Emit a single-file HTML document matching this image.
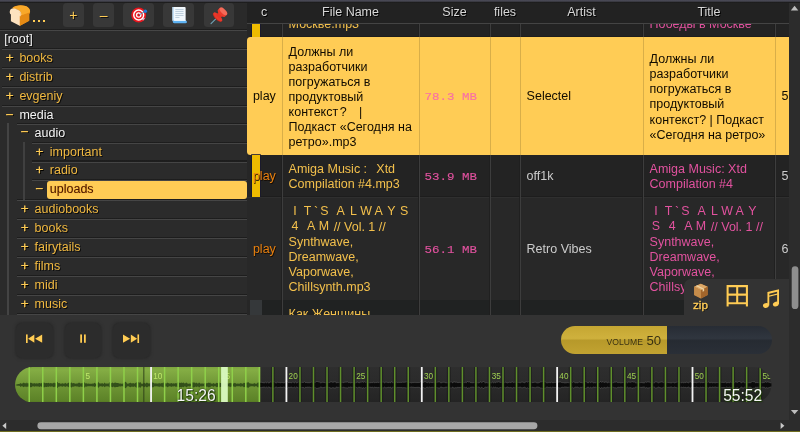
<!DOCTYPE html>
<html><head><meta charset="utf-8"><title>copyparty</title>
<style>
html,body{margin:0;padding:0;background:#2b2b2b;}
body{width:800px;height:432px;overflow:hidden;position:relative;font-family:"Liberation Sans",sans-serif;font-size:12.5px;color:#ccc;}
div{box-sizing:border-box}
#wrap{position:absolute;left:0;top:0;width:800px;height:432px;overflow:hidden;will-change:transform}
#topband{position:absolute;left:0;top:0;width:800px;height:3px;background:linear-gradient(#494955 0,#464651 38%,#2e2e33 62%,#1d1d1d 80%,#1f1f1f 100%);z-index:50}
#tree{position:absolute;left:0;top:0;width:247px;height:315px;background:#2b2b2b;overflow:hidden}
#treeh{position:absolute;left:0;top:0;width:247px;height:28.7px;background:#2a2a2a;}
.tb{position:absolute;top:3px;height:24.4px;background:#383838;border-radius:3.5px;color:#fc5;text-align:center;font-size:14px;line-height:24px;text-shadow:1px 1px 0 #111}
.sep{position:absolute;height:2.4px;margin-top:-0.3px;background:linear-gradient(#1d1d1d 0,#1e1e1e 50%,#464646 58%,#444 100%)}
.sg{position:absolute;color:#fc5;font-size:13.5px;line-height:16px;width:8px;text-align:center;text-shadow:1px 1px 0 #000;-webkit-text-stroke:0.3px #fc5}
.tn{position:absolute;color:#f1b940;font-size:12.5px;line-height:17px;white-space:nowrap;text-shadow:1px 1px 0 #0c0c0c}
.tn.w{color:#f4f4f4}
.tn.hlt{color:#4a1a00;text-shadow:0 0 1px #d8801a}
.hl{position:absolute;height:17.6px;background:#fc5;border-radius:3px}
.vl{position:absolute;width:2.5px;background:#444}
#files{position:absolute;left:247px;top:0;width:542.2px;height:315px;overflow:hidden;background:#262626}
#thead{position:absolute;left:0;top:0;width:542.2px;height:24px;background:#222;border-bottom:1.3px solid #444;z-index:5}
#thead span{position:absolute;top:5.3px;color:#d8d8d8;font-size:12.5px;line-height:15px;text-align:center;text-shadow:1px 1px 0 #000}
.row{position:absolute;left:0;width:542px}
.rbg{position:absolute;left:5px;top:0;right:0;height:100%}
.row.a .rbg{background:#232323;border-bottom:1px solid #1d1d1d}
.row.b .rbg{background:#282828;left:0.4px;border-top:1px solid #2f2f2f}
.row.play{background:#fc5;border-radius:3.5px 0 0 3.5px;color:#0c0800}
.cell{position:absolute;top:0;height:100%;border-left:1px solid #3d3d3d;padding:7.5px 0 0 5.6px;line-height:15.12px;font-size:12.5px;white-space:nowrap}
.row.a .cell,.row.b .cell{box-shadow:-0.8px 0 0 #1f1f1f}
.row .cell.c0{box-shadow:none}
.play .cell{border-left-color:#d9ae48;color:#120c00}
.cell.c0{border-left:none;text-align:center;padding-left:0}
.cell.mid{display:flex;align-items:center;padding-top:2px}
.cell.c0.mid{justify-content:center}
.fn{color:#f3c04c}
.pk{color:#e2529f}
.play .pk{color:#f96fa6}
.sz{font-family:"Liberation Mono",monospace;font-size:12.5px}
.pl{color:#e8800f;text-shadow:0.6px 0.6px 0 #140a00}
.szi{display:inline-block;transform:translate(-1.1px,1.1px) scaleY(0.9);-webkit-text-stroke:0.15px currentColor}
.ybar{position:absolute;left:5.4px;top:0;width:7.4px;height:100%;background:#eebb00;box-shadow:0 0 0 0.8px #1a1a30}
.fw{display:inline-block;width:12.7px;text-align:center;font-size:12.4px;line-height:15.12px;vertical-align:top;position:relative;top:-0.8px}
.fs{display:inline-block;width:3.5px}
#vs{position:absolute;left:789.2px;top:0;width:10.8px;height:420px;background:#2c2c2c}
#hs{position:absolute;left:0;top:419.6px;width:800px;height:12.4px;background:#2c2c2c;border-bottom:1.6px solid #706e20}
#widget{position:absolute;left:0;top:314.6px;width:789.3px;height:105px;background:#333}
#wtab{position:absolute;left:684px;top:278.6px;width:105.3px;height:40px;background:#333;border-radius:7px 0 0 0}
.pb{position:absolute;top:323.1px;width:36.6px;height:35.2px;background:#2c2c2c;border-radius:6.5px;box-shadow:0 0 2.5px 0.3px #2a2a2a}
#vol{position:absolute;left:561px;top:326.2px;width:210.5px;height:27.8px;border-radius:14px;overflow:hidden;background:linear-gradient(#272c34 0,#30363f 44%,#262b32 52%,#2a2f37 100%)}
#volf{position:absolute;left:0;top:0;width:105.8px;height:100%;background:linear-gradient(#c5a632 0,#cfb13d 44%,#b7992a 52%,#c2a331 100%)}
.t{position:absolute;color:#f6f6f6;font-size:15.6px;line-height:16px;text-shadow:0 0 2.5px #1a3308,1px 1px 1px #1d3a0a,0 0 1px #1a3308}
</style></head><body><div id="wrap">
<div id="tree">
<div class="sep" style="left:0px;top:29px;width:247px"></div>
<div class="tn w" style="left:4.2px;top:30.7px">[root]</div>
<div class="sep" style="left:1.7px;top:48px;width:245.3px"></div>
<div class="sg" style="left:5.7px;top:49.5px">+</div>
<div class="tn " style="left:19.4px;top:49.7px">books</div>
<div class="sep" style="left:1.7px;top:67px;width:245.3px"></div>
<div class="sg" style="left:5.7px;top:68.5px">+</div>
<div class="tn " style="left:19.4px;top:68.7px">distrib</div>
<div class="sep" style="left:1.7px;top:86px;width:245.3px"></div>
<div class="sg" style="left:5.7px;top:87.5px">+</div>
<div class="tn " style="left:19.4px;top:87.7px">evgeniy</div>
<div class="sep" style="left:1.7px;top:105px;width:245.3px"></div>
<div class="sg" style="left:5.7px;top:106.5px">−</div>
<div class="tn w" style="left:19.4px;top:106.7px">media</div>
<div class="sep" style="left:16.7px;top:122.9px;width:230.3px"></div>
<div class="sg" style="left:20.6px;top:124.4px">−</div>
<div class="tn w" style="left:34.599999999999994px;top:124.60000000000001px">audio</div>
<div class="sep" style="left:31.7px;top:142px;width:215.3px"></div>
<div class="sg" style="left:35.5px;top:143.5px">+</div>
<div class="tn " style="left:49.8px;top:143.7px">important</div>
<div class="sep" style="left:31.7px;top:160.5px;width:215.3px"></div>
<div class="sg" style="left:35.5px;top:162.0px">+</div>
<div class="tn " style="left:49.8px;top:162.2px">radio</div>
<div class="sep" style="left:31.7px;top:179.4px;width:215.3px"></div>
<div class="sg" style="left:35.5px;top:180.9px">−</div>
<div class="hl" style="left:47.4px;top:181.2px;width:200.0px"></div>
<div class="tn hlt" style="left:49.8px;top:181.1px">uploads</div>
<div class="sep" style="left:16.7px;top:199px;width:230.3px"></div>
<div class="sg" style="left:20.6px;top:200.5px">+</div>
<div class="tn " style="left:34.599999999999994px;top:200.7px">audiobooks</div>
<div class="sep" style="left:16.7px;top:218px;width:230.3px"></div>
<div class="sg" style="left:20.6px;top:219.5px">+</div>
<div class="tn " style="left:34.599999999999994px;top:219.7px">books</div>
<div class="sep" style="left:16.7px;top:237.3px;width:230.3px"></div>
<div class="sg" style="left:20.6px;top:238.8px">+</div>
<div class="tn " style="left:34.599999999999994px;top:239.0px">fairytails</div>
<div class="sep" style="left:16.7px;top:256.2px;width:230.3px"></div>
<div class="sg" style="left:20.6px;top:257.7px">+</div>
<div class="tn " style="left:34.599999999999994px;top:257.9px">films</div>
<div class="sep" style="left:16.7px;top:275.2px;width:230.3px"></div>
<div class="sg" style="left:20.6px;top:276.7px">+</div>
<div class="tn " style="left:34.599999999999994px;top:276.9px">midi</div>
<div class="sep" style="left:16.7px;top:294.4px;width:230.3px"></div>
<div class="sg" style="left:20.6px;top:295.9px">+</div>
<div class="tn " style="left:34.599999999999994px;top:296.09999999999997px">music</div>
<div class="sep" style="left:16.7px;top:313.4px;width:230.3px"></div>
<div class="sg" style="left:20.6px;top:314.9px">+</div>
<div class="tn " style="left:34.599999999999994px;top:315.09999999999997px">x</div>
<div class="vl" style="left:6.9px;top:123.2px;height:200px"></div>
<div class="vl" style="left:22.5px;top:142.2px;height:57.6px;background:#404040"></div>
<div id="treeh">
<svg style="position:absolute;left:8px;top:4px" width="24" height="24" viewBox="8 4 24 24">
<path d="M12.2 8.2 C15 5.2 21 4.6 25.5 6 C29 7.2 30.6 10 30 12.4 L29.2 14 L29.2 20.8 L20 25.8 L19.4 16.5 L21.2 14.6 C21.6 12 19 9.6 16 9.2 C14 8.8 12.6 8.6 12.2 8.2Z" fill="#f49a1c"/>
<path d="M21 15.2 L30 12.3 L29.2 14.2 L29.2 20.8 L20 25.8 L20 16.6Z" fill="#e58a14"/>
<path d="M12.4 8.1 C15 5.4 21 4.8 25.5 6.1 C28.6 7.1 30.4 9.6 30 12.2 L21.2 15.2 C21.8 12.2 19.2 9.8 16.2 9.3 C14.4 9 13 8.6 12.4 8.1Z" fill="#f8a829"/>
<path d="M10.2 10 C11 8.4 13.6 8.2 16 8.9 C19.4 9.8 21.8 12.2 21.2 15 L20 16.6 L20 25.6 L19.2 25.6 L10.9 21.2 L10.9 14.6 C9.6 13.6 9.4 11.6 10.2 10Z" fill="#fde2bf"/>
<path d="M18.6 12 C20.4 13 20.6 14.6 20 15.6 L19.2 16.6 L19.2 25.6 L20 25.6 L20 16.6 L21.2 15 C21.6 13.4 20.6 12.6 18.6 12Z" fill="#f7c58a"/>
</svg>
<div style="position:absolute;left:32.7px;top:19.7px;width:2.5px;height:2.6px;background:#fc5;box-shadow:5px 0 0 #fc5,10px 0 0 #fc5"></div>
<div class="tb" style="left:63px;width:20.9px">+</div>
<div class="tb" style="left:93.2px;width:20.9px">–</div>
<div class="tb" style="left:122.8px;width:30.8px"></div>
<div class="tb" style="left:163px;width:31px"></div>
<div class="tb" style="left:204px;width:30.4px"></div>
<svg style="position:absolute;left:129.6px;top:6.4px" width="18" height="18" viewBox="0 0 18 18">
<circle cx="8.7" cy="9" r="7.45" fill="#e8141c"/>
<circle cx="8.7" cy="9" r="5.7" fill="#fff"/>
<circle cx="8.7" cy="9" r="4.25" fill="#ee1c24"/>
<circle cx="8.7" cy="9" r="2.8" fill="#fff"/>
<circle cx="8.7" cy="9" r="1.5" fill="#d8101a"/>
<path d="M9 8.9 L14 6" stroke="#5a7fa8" stroke-width="1"/>
<path d="M12.6 14.2 L14.4 12" stroke="#c9c9e8" stroke-width="1.2"/>
<circle cx="15.3" cy="5.2" r="1.8" fill="#1f7ad6"/>
</svg><svg style="position:absolute;left:170.7px;top:5.9px" width="16.9" height="18.8" viewBox="0 0 18 19" preserveAspectRatio="none">
<path d="M1.6 1 L14.6 1 Q15.6 1 15.6 2 L15.6 15 L1.6 15Z" fill="#f2f8fd"/>
<path d="M1.6 1 L3 1 L3 15 L1.6 15Z" fill="#b9dcf7"/>
<path d="M3 14.6 L15.6 14.6 Q17 14.8 17 16.1 Q17 17.4 15.4 17.4 L3.6 17.4 Q1.8 17.2 1.8 15.9 Q1.9 14.8 3 14.6Z" fill="#5eb2f2"/>
<path d="M3.4 14.2 L15.6 14.2 L15.6 15.2 L3 15.2Z" fill="#e6f3fc"/>
<g stroke="#b5c9d8" stroke-width="0.9"><path d="M4.6 3.6H13.4M4.6 5.6H13.4M4.6 7.6H13.4M4.6 9.6H13.4M4.6 11.6H9"/></g>
</svg><svg style="position:absolute;left:204px;top:3px" width="31" height="25" viewBox="204 3 31 25">
<g transform="translate(218.5 16.2) rotate(45)">
<path d="M0 2 L0 10.6" stroke="#6fa3b6" stroke-width="1.1" stroke-linecap="round"/>
<ellipse cx="0" cy="1.7" rx="5.9" ry="2.3" fill="#c3271d"/>
<ellipse cx="0" cy="0.9" rx="5.9" ry="2.3" fill="#e8382a"/>
<path d="M-2.3 1 L-2.9 -4 L2.9 -4 L2.3 1Z" fill="#e33326"/>
<path d="M-4.9 -6.9 L-4.9 -4.4 A4.9 2.3 0 0 0 4.9 -4.4 L4.9 -6.9Z" fill="#ea3a2c"/>
<ellipse cx="0" cy="-6.9" rx="4.9" ry="2.3" fill="#f56a58"/>
</g>
</svg>
</div>
</div>

<div id="files">
 <div id="thead">
  <span style="left:2px;width:30px">c</span>
  <span style="left:35px;width:137px">File Name</span>
  <span style="left:172px;width:71px">Size</span>
  <span style="left:243px;width:30px">files</span>
  <span style="left:273px;width:123px">Artist</span>
  <span style="left:396px;width:132px">Title</span>
 </div>
 <!-- row 0 (partially hidden) -->
 <div class="row a" style="top:-20px;height:57px"><div class="rbg"></div>
  <div class="ybar"></div>
  <div class="cell c0" style="left:0;width:34.8px"></div>
  <div class="cell fn" style="left:35px;width:137px;padding-top:36.6px">Москве.mp3</div>
  <div class="cell" style="left:172px;width:71px"></div>
  <div class="cell" style="left:243px;width:30px"></div>
  <div class="cell" style="left:273px;width:123px"></div>
  <div class="cell pk" style="left:396px;width:132px;padding-top:36.6px">Победы в Москве</div>
  <div class="cell" style="left:528px;width:14px"></div>
 </div>
 <!-- row 1 playing -->
 <div class="row play" style="top:37px;height:117.6px">
  <div class="cell c0 mid" style="left:0;width:34.8px">play</div>
  <div class="cell" style="left:35px;width:137px">Должны ли<br>разработчики<br>погружаться в<br>продуктовый<br>контекст<span class="fw" style="text-align:left;padding-left:1.5px;box-sizing:border-box;font-size:12.5px;top:0">?</span>&nbsp;<span class="fw" style="font-size:12.5px;top:0">|</span><br>Подкаст «Сегодня на<br>ретро».mp3</div>
  <div class="cell mid pk sz" style="left:172px;width:71px"><span class="szi">78.3 MB</span></div>
  <div class="cell" style="left:243px;width:30px"></div>
  <div class="cell mid" style="left:273px;width:123px">Selectel</div>
  <div class="cell" style="left:396px;width:132px;padding-top:15.06px">Должны ли<br>разработчики<br>погружаться в<br>продуктовый<br>контекст? | Подкаст<br>«Сегодня на ретро»</div>
  <div class="cell mid" style="left:528px;width:14px">58</div>
 </div>
 <!-- row 2 -->
 <div class="row a" style="top:154.6px;height:42.6px"><div class="rbg"></div>
  <div class="ybar"></div>
  <div class="cell c0 mid pl" style="left:0;width:34.8px">play</div>
  <div class="cell fn" style="left:35px;width:137px">Amiga Music<span class="fw" style="text-align:left;padding-left:3.4px;box-sizing:border-box;font-size:12.5px;top:0">:</span> Xtd<br>Compilation #4.mp3</div>
  <div class="cell mid pk sz" style="left:172px;width:71px"><span class="szi">53.9 MB</span></div>
  <div class="cell" style="left:243px;width:30px"></div>
  <div class="cell mid" style="left:273px;width:123px">off1k</div>
  <div class="cell pk" style="left:396px;width:132px">Amiga Music: Xtd<br>Compilation #4</div>
  <div class="cell mid" style="left:528px;width:14px">58</div>
 </div>
 <!-- row 3 -->
 <div class="row b" style="top:197.2px;height:102.4px"><div class="rbg"></div>
  <div class="cell c0 mid pl" style="left:0;width:34.8px">play</div>
  <div class="cell fn" style="left:35px;width:137px"><span class="fw">I</span><span class="fw">T</span>`<span class="fw">S</span><span class="fs"> </span><span class="fw">A</span><span class="fw">L</span><span class="fw">W</span><span class="fw">A</span><span class="fw">Y</span><span class="fw">S</span><br><span class="fw">4</span><span class="fs"> </span><span class="fw">A</span><span class="fw">M</span> // Vol. 1 //<br>Synthwave,<br>Dreamwave,<br>Vaporwave,<br>Chillsynth.mp3</div>
  <div class="cell mid pk sz" style="left:172px;width:71px"><span class="szi">56.1 MB</span></div>
  <div class="cell" style="left:243px;width:30px"></div>
  <div class="cell mid" style="left:273px;width:123px">Retro Vibes</div>
  <div class="cell pk" style="left:396px;width:132px"><span class="fw">I</span><span class="fw">T</span>`<span class="fw">S</span><span class="fs"> </span><span class="fw">A</span><span class="fw">L</span><span class="fw">W</span><span class="fw">A</span><span class="fw">Y</span><br><span class="fw">S</span><span class="fs"> </span><span class="fw">4</span><span class="fs"> </span><span class="fw">A</span><span class="fw">M</span> // Vol. 1 //<br>Synthwave,<br>Dreamwave,<br>Vaporwave,<br>Chillsynth</div>
  <div class="cell mid" style="left:528px;width:14px">60</div>
 </div>
 <!-- row 4 -->
 <div class="row a" style="top:299.8px;height:60px"><div class="rbg" style="left:15px;background:#202222"></div>
  <div style="position:absolute;left:3px;top:0;width:12px;height:100%;background:#35383a"></div>
  <div class="cell fn" style="left:35px;width:137px">Как Женщины</div>
  <div class="cell" style="left:172px;width:71px"></div>
  <div class="cell" style="left:243px;width:30px"></div>
  <div class="cell" style="left:273px;width:123px"></div>
  <div class="cell pk" style="left:396px;width:132px"></div>
  <div class="cell" style="left:528px;width:14px"></div>
 </div>
</div>

<div id="vs">
 <svg style="position:absolute;left:0;top:0" width="11" height="420" viewBox="0 0 11 420">
  <path d="M1.8 10.4 L5.55 5.8 L9.3 10.4Z" fill="#bdbdbd"/>
  <path d="M1.9 410 L5.6 414.2 L9.3 410Z" fill="#bdbdbd"/>
  <rect x="2.7" y="266.3" width="6.7" height="42.8" rx="3.35" fill="#8e8e8e"/>
 </svg>
</div>
<div id="widget"></div>
<div id="wtab"></div>
<svg style="position:absolute;left:692.5px;top:283.4px" width="15.8" height="16.4" viewBox="0 0 17 17" preserveAspectRatio="none">
<path d="M8.4 0.8 L15.8 4 L15.8 12.4 L8.6 16.2 L1.2 12.4 L1.2 4Z" fill="#b6793a"/>
<path d="M8.4 0.8 L15.8 4 L8.6 7.6 L1.2 4Z" fill="#dda866"/>
<path d="M1.2 4 L8.6 7.6 L8.6 16.2 L1.2 12.4Z" fill="#c48b4a"/>
<path d="M8.6 7.6 L15.8 4 L15.8 12.4 L8.6 16.2Z" fill="#a2652b"/>
<path d="M4.6 2.4 L12 5.9 L12 8.4 L10.4 9.2 L10.4 6.7 L3 3.2Z" fill="#ecd2a4"/>
</svg>
<div style="position:absolute;left:691px;top:297.7px;width:19px;text-align:center;color:#fc5;font-size:11.7px;-webkit-text-stroke:0.35px #fc5;line-height:13px;text-shadow:1px 1px 0 #111">zip</div>
<svg style="position:absolute;left:725.5px;top:284px;filter:drop-shadow(0.7px 0.7px 0 #1c1c1c)" width="23" height="23" viewBox="0 0 23 23">
<g fill="none" stroke="#fc5" stroke-width="2.1"><path d="M1.6 2.1H20.9V19.2H1.6ZM11.2 2.1V19.2M1.6 10.6H20.9M1.6 19V22.6M20.9 19V22.6"/></g>
</svg><svg style="position:absolute;left:761px;top:288px;filter:drop-shadow(0.7px 0.7px 0 #1c1c1c)" width="20" height="21" viewBox="0 0 20 21">
<g fill="#fc5"><ellipse cx="4.9" cy="17.5" rx="3" ry="2.3" transform="rotate(-22 4.9 17.5)"/><ellipse cx="14.8" cy="16.1" rx="3" ry="2.3" transform="rotate(-22 14.8 16.1)"/>
<path d="M6.4 17.4 L6.4 4.1 L18 1.3 L18 16 L16.1 16 L16.1 6.8 L8.3 8.7 L8.3 17.4Z M8.3 5.7 L8.3 7.4 L16.1 5.5 L16.1 3.8Z" fill-rule="evenodd"/></g>
</svg>
<div class="pb" style="left:16.2px"></div>
<div class="pb" style="left:64.6px"></div>
<div class="pb" style="left:113.2px"></div>
<svg style="position:absolute;left:0;top:314px;filter:drop-shadow(0.7px 0.8px 0 #151005)" width="160" height="50" viewBox="0 314 160 50">
 <g fill="#fc5">
  <rect x="26" y="334.4" width="1.7" height="8.6"/><path d="M34.4 334.6 L34.4 342.8 L28 338.7Z"/><path d="M42.2 334.6 L42.2 342.8 L35 338.7Z"/>
  <rect x="80.2" y="334.4" width="1.8" height="8.4"/><rect x="84" y="334.4" width="1.8" height="8.4"/>
  <rect x="137.4" y="334.4" width="1.7" height="8.6"/><path d="M130.8 334.6 L130.8 342.8 L137.2 338.7Z"/><path d="M123 334.6 L123 342.8 L130.2 338.7Z"/>
 </g>
</svg>
<div id="vol"><div id="volf"></div>
 <div style="position:absolute;left:45.6px;top:11.9px;font-size:8.6px;line-height:9px;color:#3a3212">VOLUME</div>
 <div style="position:absolute;left:85.5px;top:8.3px;font-size:13.2px;line-height:14px;color:#3a3212">50</div>
</div>
<svg id="sb" width="756.5" height="35.5" viewBox="0 0 756.5 35.5" style="position:absolute;left:15.2px;top:366.8px">
<defs><clipPath id="pill"><rect x="0" y="0" width="756.5" height="35.5" rx="17.75" ry="17.75"/></clipPath>
<linearGradient id="gd" x1="0" y1="0" x2="0" y2="1"><stop offset="0" stop-color="#2e2e2e"/><stop offset="0.5" stop-color="#2a2a2a"/><stop offset="1" stop-color="#242424"/></linearGradient>
<linearGradient id="gg" x1="0" y1="0" x2="0" y2="1"><stop offset="0" stop-color="#7ea53f"/><stop offset="0.08" stop-color="#84ad44"/><stop offset="0.5" stop-color="#6f9635"/><stop offset="0.94" stop-color="#5d8328"/><stop offset="1" stop-color="#557822"/></linearGradient>
</defs><g clip-path="url(#pill)">
<rect width="756.5" height="35.5" fill="url(#gd)"/>
<rect width="245.3" height="35.5" fill="url(#gg)"/>
<path d="M245.3,16.1 L246.2,15.9 L247.1,16.1 L248.0,16.4 L248.9,16.4 L249.8,16.4 L250.7,15.8 L251.6,16.5 L252.5,15.8 L253.4,16.5 L254.3,16.5 L255.2,15.6 L256.1,15.9 L257.0,15.6 L257.9,15.8 L258.8,15.3 L259.7,15.8 L260.6,16.4 L261.5,16.5 L262.4,15.9 L263.3,16.1 L264.2,16.0 L265.1,16.5 L266.0,16.3 L266.9,16.0 L267.8,16.2 L268.7,16.5 L269.6,16.3 L270.5,15.6 L271.4,16.2 L272.3,15.3 L273.2,16.3 L274.1,16.2 L275.0,16.1 L275.9,16.4 L276.8,16.5 L277.7,15.6 L278.6,16.0 L279.5,16.5 L280.4,15.7 L281.3,16.5 L282.2,16.4 L283.1,15.6 L284.0,15.9 L284.9,16.0 L285.8,16.2 L286.7,16.0 L287.6,16.1 L288.5,16.1 L289.4,15.3 L290.3,16.3 L291.2,16.1 L292.1,16.3 L293.0,16.5 L293.9,16.2 L294.8,16.4 L295.7,16.0 L296.6,15.8 L297.5,16.3 L298.4,16.2 L299.3,16.0 L300.2,16.1 L301.1,15.2 L302.0,15.3 L302.9,15.2 L303.8,15.7 L304.7,15.8 L305.6,16.5 L306.5,16.3 L307.4,15.9 L308.3,16.0 L309.2,16.1 L310.1,16.4 L311.0,16.3 L311.9,16.3 L312.8,16.2 L313.7,16.3 L314.6,16.1 L315.5,15.6 L316.4,15.4 L317.3,15.9 L318.2,15.6 L319.1,16.1 L320.0,15.1 L320.9,16.3 L321.8,16.5 L322.7,16.2 L323.6,16.2 L324.5,16.0 L325.4,16.3 L326.3,16.1 L327.2,15.9 L328.1,16.3 L329.0,16.3 L329.9,15.7 L330.8,15.8 L331.7,15.7 L332.6,15.6 L333.5,16.3 L334.4,16.1 L335.3,16.5 L336.2,16.3 L337.1,16.3 L338.0,16.1 L338.9,16.4 L339.8,16.4 L340.7,16.5 L341.6,16.0 L342.5,15.7 L343.4,16.2 L344.3,16.5 L345.2,15.6 L346.1,16.3 L347.0,15.2 L347.9,15.7 L348.8,16.0 L349.7,15.3 L350.6,16.1 L351.5,15.9 L352.4,15.9 L353.3,16.3 L354.2,16.4 L355.1,16.2 L356.0,16.5 L356.9,15.9 L357.8,16.4 L358.7,15.8 L359.6,16.4 L360.5,16.1 L361.4,16.2 L362.3,15.9 L363.2,16.2 L364.1,16.0 L365.0,15.8 L365.9,16.1 L366.8,16.4 L367.7,15.7 L368.6,15.8 L369.5,16.5 L370.4,15.9 L371.3,15.8 L372.2,15.9 L373.1,16.5 L374.0,15.9 L374.9,16.1 L375.8,16.5 L376.7,15.1 L377.6,16.4 L378.5,16.3 L379.4,15.6 L380.3,16.5 L381.2,15.8 L382.1,15.9 L383.0,16.5 L383.9,15.8 L384.8,16.2 L385.7,16.0 L386.6,16.1 L387.5,15.8 L388.4,15.9 L389.3,15.9 L390.2,15.8 L391.1,15.6 L392.0,15.5 L392.9,16.0 L393.8,16.3 L394.7,16.2 L395.6,16.3 L396.5,16.5 L397.4,16.3 L398.3,16.3 L399.2,16.2 L400.1,15.8 L401.0,16.5 L401.9,15.9 L402.8,16.3 L403.7,16.2 L404.6,16.1 L405.5,15.5 L406.4,15.5 L407.3,15.9 L408.2,16.1 L409.1,15.6 L410.0,15.4 L410.9,15.6 L411.8,16.3 L412.7,16.3 L413.6,15.8 L414.5,16.5 L415.4,16.0 L416.3,16.1 L417.2,16.4 L418.1,15.8 L419.0,16.4 L419.9,16.3 L420.8,15.6 L421.7,16.1 L422.6,15.8 L423.5,15.6 L424.4,15.5 L425.3,16.3 L426.2,16.4 L427.1,16.3 L428.0,15.6 L428.9,16.1 L429.8,15.9 L430.7,16.4 L431.6,16.4 L432.5,16.4 L433.4,16.2 L434.3,16.1 L435.2,15.9 L436.1,15.2 L437.0,16.2 L437.9,16.4 L438.8,15.6 L439.7,15.6 L440.6,15.9 L441.5,15.8 L442.4,16.2 L443.3,16.2 L444.2,16.1 L445.1,16.1 L446.0,16.2 L446.9,16.1 L447.8,16.5 L448.7,16.1 L449.6,16.3 L450.5,15.9 L451.4,16.4 L452.3,15.1 L453.2,15.8 L454.1,15.2 L455.0,16.0 L455.9,16.4 L456.8,16.3 L457.7,16.4 L458.6,16.3 L459.5,16.1 L460.4,15.7 L461.3,16.5 L462.2,16.2 L463.1,16.5 L464.0,16.5 L464.9,15.9 L465.8,15.4 L466.7,16.3 L467.6,15.8 L468.5,14.8 L469.4,15.9 L470.3,16.5 L471.2,16.1 L472.1,16.5 L473.0,16.5 L473.9,16.5 L474.8,16.5 L475.7,16.1 L476.6,16.5 L477.5,15.7 L478.4,16.5 L479.3,15.8 L480.2,16.5 L481.1,15.8 L482.0,15.8 L482.9,15.8 L483.8,15.3 L484.7,15.9 L485.6,16.1 L486.5,16.0 L487.4,16.3 L488.3,15.7 L489.2,16.4 L490.1,15.7 L491.0,16.0 L491.9,16.5 L492.8,16.5 L493.7,16.1 L494.6,15.9 L495.5,16.2 L496.4,15.9 L497.3,15.4 L498.2,16.2 L499.1,15.8 L500.0,16.0 L500.9,15.9 L501.8,16.4 L502.7,16.1 L503.6,16.1 L504.5,16.3 L505.4,16.4 L506.3,15.9 L507.2,15.7 L508.1,15.9 L509.0,16.2 L509.9,16.4 L510.8,15.6 L511.7,15.3 L512.6,15.9 L513.5,14.9 L514.4,15.9 L515.3,16.3 L516.2,15.8 L517.1,16.4 L518.0,16.1 L518.9,16.2 L519.8,15.8 L520.7,15.9 L521.6,16.4 L522.5,16.5 L523.4,16.4 L524.3,16.3 L525.2,15.5 L526.1,15.8 L527.0,15.1 L527.9,15.3 L528.8,15.7 L529.7,15.3 L530.6,15.7 L531.5,16.4 L532.4,16.5 L533.3,16.2 L534.2,15.9 L535.1,16.5 L536.0,16.0 L536.9,15.7 L537.8,16.5 L538.7,16.2 L539.6,16.1 L540.5,16.1 L541.4,15.8 L542.3,15.5 L543.2,15.8 L544.1,15.8 L545.0,15.4 L545.9,15.8 L546.8,16.3 L547.7,16.3 L548.6,16.2 L549.5,16.5 L550.4,16.5 L551.3,16.5 L552.2,16.1 L553.1,16.4 L554.0,16.2 L554.9,16.4 L555.8,16.1 L556.7,15.6 L557.6,16.3 L558.5,15.4 L559.4,15.9 L560.3,16.4 L561.2,16.3 L562.1,16.5 L563.0,16.5 L563.9,15.6 L564.8,15.8 L565.7,16.3 L566.6,16.2 L567.5,16.4 L568.4,16.0 L569.3,16.3 L570.2,15.0 L571.1,15.0 L572.0,16.4 L572.9,16.3 L573.8,16.4 L574.7,15.4 L575.6,16.3 L576.5,15.7 L577.4,15.8 L578.3,16.5 L579.2,16.2 L580.1,16.4 L581.0,16.5 L581.9,15.7 L582.8,16.4 L583.7,16.2 L584.6,16.1 L585.5,15.1 L586.4,16.0 L587.3,15.6 L588.2,15.4 L589.1,16.3 L590.0,15.6 L590.9,15.8 L591.8,15.9 L592.7,16.5 L593.6,15.9 L594.5,16.0 L595.4,16.1 L596.3,15.6 L597.2,16.5 L598.1,16.5 L599.0,16.0 L599.9,15.7 L600.8,15.8 L601.7,15.5 L602.6,16.2 L603.5,16.3 L604.4,16.1 L605.3,16.4 L606.2,16.5 L607.1,16.1 L608.0,16.5 L608.9,16.0 L609.8,16.5 L610.7,16.5 L611.6,15.7 L612.5,16.5 L613.4,15.7 L614.3,15.8 L615.2,15.7 L616.1,16.2 L617.0,15.0 L617.9,15.7 L618.8,15.7 L619.7,15.7 L620.6,16.5 L621.5,16.5 L622.4,16.5 L623.3,16.0 L624.2,16.2 L625.1,16.5 L626.0,15.8 L626.9,16.4 L627.8,16.3 L628.7,16.5 L629.6,16.4 L630.5,15.6 L631.4,16.0 L632.3,15.6 L633.2,15.6 L634.1,15.7 L635.0,15.9 L635.9,16.3 L636.8,16.4 L637.7,16.4 L638.6,16.5 L639.5,16.4 L640.4,15.6 L641.3,15.6 L642.2,15.7 L643.1,16.5 L644.0,16.4 L644.9,15.8 L645.8,15.8 L646.7,15.5 L647.6,15.8 L648.5,16.3 L649.4,15.8 L650.3,16.3 L651.2,16.5 L652.1,16.3 L653.0,15.8 L653.9,16.5 L654.8,16.2 L655.7,16.5 L656.6,16.5 L657.5,16.0 L658.4,16.0 L659.3,16.5 L660.2,16.4 L661.1,15.7 L662.0,16.2 L662.9,15.5 L663.8,15.4 L664.7,16.4 L665.6,16.0 L666.5,16.4 L667.4,16.0 L668.3,16.5 L669.2,15.9 L670.1,16.4 L671.0,15.9 L671.9,15.8 L672.8,16.3 L673.7,16.5 L674.6,15.8 L675.5,15.5 L676.4,16.3 L677.3,15.5 L678.2,16.1 L679.1,16.2 L680.0,15.9 L680.9,16.3 L681.8,16.5 L682.7,16.0 L683.6,15.9 L684.5,15.8 L685.4,16.4 L686.3,16.0 L687.2,16.4 L688.1,16.0 L689.0,16.5 L689.9,15.8 L690.8,15.2 L691.7,15.8 L692.6,16.2 L693.5,15.5 L694.4,16.4 L695.3,16.4 L696.2,15.9 L697.1,16.5 L698.0,16.5 L698.9,16.1 L699.8,16.5 L700.7,16.5 L701.6,16.2 L702.5,16.2 L703.4,16.3 L704.3,16.1 L705.2,15.7 L706.1,16.0 L707.0,16.0 L707.9,16.0 L708.8,16.1 L709.7,16.0 L710.6,15.8 L711.5,16.5 L712.4,16.2 L713.3,16.0 L714.2,16.5 L715.1,15.9 L716.0,15.7 L716.9,16.4 L717.8,16.3 L718.7,15.9 L719.6,16.3 L720.5,15.5 L721.4,15.7 L722.3,16.1 L723.2,15.4 L724.1,15.1 L725.0,15.1 L725.9,16.5 L726.8,16.3 L727.7,15.7 L728.6,15.7 L729.5,16.4 L730.4,16.3 L731.3,16.1 L732.2,16.4 L733.1,16.2 L734.0,16.5 L734.9,16.3 L735.8,16.3 L736.7,15.6 L737.6,15.1 L738.5,15.4 L739.4,15.0 L740.3,16.5 L741.2,16.1 L742.1,16.4 L743.0,16.1 L743.9,16.4 L744.8,16.2 L745.7,15.7 L746.6,16.2 L747.5,16.4 L748.4,16.3 L749.3,16.3 L750.2,15.4 L751.1,15.8 L752.0,16.0 L752.9,15.2 L753.8,16.0 L754.7,16.1 L755.6,16.5 L756.5,16.5 L756.5,19.4 L755.6,19.4 L754.7,19.8 L753.8,19.9 L752.9,20.7 L752.0,19.9 L751.1,20.1 L750.2,20.5 L749.3,19.6 L748.4,19.6 L747.5,19.5 L746.6,19.7 L745.7,20.2 L744.8,19.7 L743.9,19.5 L743.0,19.8 L742.1,19.5 L741.2,19.8 L740.3,19.4 L739.4,20.9 L738.5,20.5 L737.6,20.8 L736.7,20.3 L735.8,19.6 L734.9,19.6 L734.0,19.4 L733.1,19.7 L732.2,19.5 L731.3,19.8 L730.4,19.6 L729.5,19.5 L728.6,20.2 L727.7,20.2 L726.8,19.6 L725.9,19.4 L725.0,20.8 L724.1,20.8 L723.2,20.5 L722.3,19.8 L721.4,20.2 L720.5,20.4 L719.6,19.6 L718.7,20.0 L717.8,19.6 L716.9,19.5 L716.0,20.2 L715.1,20.0 L714.2,19.4 L713.3,19.9 L712.4,19.7 L711.5,19.4 L710.6,20.1 L709.7,19.9 L708.8,19.8 L707.9,19.9 L707.0,19.9 L706.1,19.9 L705.2,20.2 L704.3,19.8 L703.4,19.6 L702.5,19.7 L701.6,19.7 L700.7,19.4 L699.8,19.4 L698.9,19.8 L698.0,19.4 L697.1,19.4 L696.2,20.0 L695.3,19.5 L694.4,19.5 L693.5,20.4 L692.6,19.7 L691.7,20.1 L690.8,20.7 L689.9,20.1 L689.0,19.4 L688.1,19.9 L687.2,19.5 L686.3,19.9 L685.4,19.5 L684.5,20.1 L683.6,20.0 L682.7,19.9 L681.8,19.4 L680.9,19.6 L680.0,20.0 L679.1,19.7 L678.2,19.8 L677.3,20.4 L676.4,19.6 L675.5,20.4 L674.6,20.1 L673.7,19.4 L672.8,19.6 L671.9,20.1 L671.0,20.0 L670.1,19.5 L669.2,20.0 L668.3,19.4 L667.4,19.9 L666.5,19.5 L665.6,19.9 L664.7,19.5 L663.8,20.5 L662.9,20.4 L662.0,19.7 L661.1,20.2 L660.2,19.5 L659.3,19.4 L658.4,19.9 L657.5,19.9 L656.6,19.4 L655.7,19.4 L654.8,19.7 L653.9,19.4 L653.0,20.1 L652.1,19.6 L651.2,19.4 L650.3,19.6 L649.4,20.1 L648.5,19.6 L647.6,20.1 L646.7,20.4 L645.8,20.1 L644.9,20.1 L644.0,19.5 L643.1,19.4 L642.2,20.2 L641.3,20.3 L640.4,20.3 L639.5,19.5 L638.6,19.4 L637.7,19.5 L636.8,19.5 L635.9,19.6 L635.0,20.0 L634.1,20.2 L633.2,20.3 L632.3,20.3 L631.4,19.9 L630.5,20.3 L629.6,19.5 L628.7,19.4 L627.8,19.6 L626.9,19.5 L626.0,20.1 L625.1,19.4 L624.2,19.7 L623.3,19.9 L622.4,19.4 L621.5,19.4 L620.6,19.4 L619.7,20.2 L618.8,20.2 L617.9,20.2 L617.0,20.9 L616.1,19.7 L615.2,20.2 L614.3,20.1 L613.4,20.2 L612.5,19.4 L611.6,20.2 L610.7,19.4 L609.8,19.4 L608.9,19.9 L608.0,19.4 L607.1,19.8 L606.2,19.4 L605.3,19.5 L604.4,19.8 L603.5,19.6 L602.6,19.7 L601.7,20.4 L600.8,20.1 L599.9,20.2 L599.0,19.9 L598.1,19.4 L597.2,19.4 L596.3,20.3 L595.4,19.8 L594.5,19.9 L593.6,20.0 L592.7,19.4 L591.8,20.0 L590.9,20.1 L590.0,20.3 L589.1,19.6 L588.2,20.5 L587.3,20.3 L586.4,19.9 L585.5,20.8 L584.6,19.8 L583.7,19.7 L582.8,19.5 L581.9,20.2 L581.0,19.4 L580.1,19.5 L579.2,19.7 L578.3,19.4 L577.4,20.1 L576.5,20.2 L575.6,19.6 L574.7,20.5 L573.8,19.5 L572.9,19.6 L572.0,19.5 L571.1,20.9 L570.2,20.9 L569.3,19.6 L568.4,19.9 L567.5,19.5 L566.6,19.7 L565.7,19.6 L564.8,20.1 L563.9,20.3 L563.0,19.4 L562.1,19.4 L561.2,19.6 L560.3,19.5 L559.4,20.0 L558.5,20.5 L557.6,19.6 L556.7,20.3 L555.8,19.8 L554.9,19.5 L554.0,19.7 L553.1,19.5 L552.2,19.8 L551.3,19.4 L550.4,19.4 L549.5,19.4 L548.6,19.7 L547.7,19.6 L546.8,19.6 L545.9,20.1 L545.0,20.5 L544.1,20.1 L543.2,20.1 L542.3,20.4 L541.4,20.1 L540.5,19.8 L539.6,19.8 L538.7,19.7 L537.8,19.4 L536.9,20.2 L536.0,19.9 L535.1,19.4 L534.2,20.0 L533.3,19.7 L532.4,19.4 L531.5,19.5 L530.6,20.2 L529.7,20.6 L528.8,20.2 L527.9,20.6 L527.0,20.8 L526.1,20.1 L525.2,20.4 L524.3,19.6 L523.4,19.5 L522.5,19.4 L521.6,19.5 L520.7,20.0 L519.8,20.1 L518.9,19.7 L518.0,19.8 L517.1,19.5 L516.2,20.1 L515.3,19.6 L514.4,20.0 L513.5,21.0 L512.6,20.0 L511.7,20.6 L510.8,20.3 L509.9,19.5 L509.0,19.7 L508.1,20.0 L507.2,20.2 L506.3,20.0 L505.4,19.5 L504.5,19.6 L503.6,19.8 L502.7,19.8 L501.8,19.5 L500.9,20.0 L500.0,19.9 L499.1,20.1 L498.2,19.7 L497.3,20.5 L496.4,20.0 L495.5,19.7 L494.6,20.0 L493.7,19.8 L492.8,19.4 L491.9,19.4 L491.0,19.9 L490.1,20.2 L489.2,19.5 L488.3,20.2 L487.4,19.6 L486.5,19.9 L485.6,19.8 L484.7,20.0 L483.8,20.6 L482.9,20.1 L482.0,20.1 L481.1,20.1 L480.2,19.4 L479.3,20.1 L478.4,19.4 L477.5,20.2 L476.6,19.4 L475.7,19.8 L474.8,19.4 L473.9,19.4 L473.0,19.4 L472.1,19.4 L471.2,19.8 L470.3,19.4 L469.4,20.0 L468.5,21.1 L467.6,20.1 L466.7,19.6 L465.8,20.5 L464.9,20.0 L464.0,19.4 L463.1,19.4 L462.2,19.7 L461.3,19.4 L460.4,20.2 L459.5,19.8 L458.6,19.6 L457.7,19.5 L456.8,19.6 L455.9,19.5 L455.0,19.9 L454.1,20.7 L453.2,20.1 L452.3,20.8 L451.4,19.5 L450.5,20.0 L449.6,19.6 L448.7,19.8 L447.8,19.4 L446.9,19.8 L446.0,19.7 L445.1,19.8 L444.2,19.8 L443.3,19.7 L442.4,19.7 L441.5,20.1 L440.6,20.0 L439.7,20.3 L438.8,20.3 L437.9,19.5 L437.0,19.7 L436.1,20.7 L435.2,20.0 L434.3,19.8 L433.4,19.7 L432.5,19.5 L431.6,19.5 L430.7,19.5 L429.8,20.0 L428.9,19.8 L428.0,20.3 L427.1,19.6 L426.2,19.5 L425.3,19.6 L424.4,20.4 L423.5,20.3 L422.6,20.1 L421.7,19.8 L420.8,20.3 L419.9,19.6 L419.0,19.5 L418.1,20.1 L417.2,19.5 L416.3,19.8 L415.4,19.9 L414.5,19.4 L413.6,20.1 L412.7,19.6 L411.8,19.6 L410.9,20.3 L410.0,20.5 L409.1,20.3 L408.2,19.8 L407.3,20.0 L406.4,20.4 L405.5,20.4 L404.6,19.8 L403.7,19.7 L402.8,19.6 L401.9,20.0 L401.0,19.4 L400.1,20.1 L399.2,19.7 L398.3,19.6 L397.4,19.6 L396.5,19.4 L395.6,19.6 L394.7,19.7 L393.8,19.6 L392.9,19.9 L392.0,20.4 L391.1,20.3 L390.2,20.1 L389.3,20.0 L388.4,20.0 L387.5,20.1 L386.6,19.8 L385.7,19.9 L384.8,19.7 L383.9,20.1 L383.0,19.4 L382.1,20.0 L381.2,20.1 L380.3,19.4 L379.4,20.3 L378.5,19.6 L377.6,19.5 L376.7,20.8 L375.8,19.4 L374.9,19.8 L374.0,20.0 L373.1,19.4 L372.2,20.0 L371.3,20.1 L370.4,20.0 L369.5,19.4 L368.6,20.1 L367.7,20.2 L366.8,19.5 L365.9,19.8 L365.0,20.1 L364.1,19.9 L363.2,19.7 L362.3,20.0 L361.4,19.7 L360.5,19.8 L359.6,19.5 L358.7,20.1 L357.8,19.5 L356.9,20.0 L356.0,19.4 L355.1,19.7 L354.2,19.5 L353.3,19.6 L352.4,20.0 L351.5,20.0 L350.6,19.8 L349.7,20.6 L348.8,19.9 L347.9,20.2 L347.0,20.7 L346.1,19.6 L345.2,20.3 L344.3,19.4 L343.4,19.7 L342.5,20.2 L341.6,19.9 L340.7,19.4 L339.8,19.5 L338.9,19.5 L338.0,19.8 L337.1,19.6 L336.2,19.6 L335.3,19.4 L334.4,19.8 L333.5,19.6 L332.6,20.3 L331.7,20.2 L330.8,20.1 L329.9,20.2 L329.0,19.6 L328.1,19.6 L327.2,20.0 L326.3,19.8 L325.4,19.6 L324.5,19.9 L323.6,19.7 L322.7,19.7 L321.8,19.4 L320.9,19.6 L320.0,20.8 L319.1,19.8 L318.2,20.3 L317.3,20.0 L316.4,20.5 L315.5,20.3 L314.6,19.8 L313.7,19.6 L312.8,19.7 L311.9,19.6 L311.0,19.6 L310.1,19.5 L309.2,19.8 L308.3,19.9 L307.4,20.0 L306.5,19.6 L305.6,19.4 L304.7,20.1 L303.8,20.2 L302.9,20.7 L302.0,20.6 L301.1,20.7 L300.2,19.8 L299.3,19.9 L298.4,19.7 L297.5,19.6 L296.6,20.1 L295.7,19.9 L294.8,19.5 L293.9,19.7 L293.0,19.4 L292.1,19.6 L291.2,19.8 L290.3,19.6 L289.4,20.6 L288.5,19.8 L287.6,19.8 L286.7,19.9 L285.8,19.7 L284.9,19.9 L284.0,20.0 L283.1,20.3 L282.2,19.5 L281.3,19.4 L280.4,20.2 L279.5,19.4 L278.6,19.9 L277.7,20.3 L276.8,19.4 L275.9,19.5 L275.0,19.8 L274.1,19.7 L273.2,19.6 L272.3,20.6 L271.4,19.7 L270.5,20.3 L269.6,19.6 L268.7,19.4 L267.8,19.7 L266.9,19.9 L266.0,19.6 L265.1,19.4 L264.2,19.9 L263.3,19.8 L262.4,20.0 L261.5,19.4 L260.6,19.5 L259.7,20.1 L258.8,20.6 L257.9,20.1 L257.0,20.3 L256.1,20.0 L255.2,20.3 L254.3,19.4 L253.4,19.4 L252.5,20.1 L251.6,19.4 L250.7,20.1 L249.8,19.5 L248.9,19.5 L248.0,19.5 L247.1,19.8 L246.2,20.0 L245.3,19.8Z" fill="#0a0a0a" stroke="#0a0a0a" stroke-width="0.8" opacity="0.95"/>
<path d="M245.3,15.4 L246.2,15.2 L247.1,15.4 L248.0,15.7 L248.9,15.7 L249.8,15.7 L250.7,15.1 L251.6,15.8 L252.5,15.1 L253.4,15.8 L254.3,15.8 L255.2,14.9 L256.1,15.2 L257.0,14.9 L257.9,15.1 L258.8,14.6 L259.7,15.1 L260.6,15.7 L261.5,15.8 L262.4,15.2 L263.3,15.4 L264.2,15.3 L265.1,15.8 L266.0,15.6 L266.9,15.3 L267.8,15.5 L268.7,15.8 L269.6,15.6 L270.5,14.9 L271.4,15.5 L272.3,14.6 L273.2,15.6 L274.1,15.5 L275.0,15.4 L275.9,15.7 L276.8,15.8 L277.7,14.9 L278.6,15.3 L279.5,15.8 L280.4,15.0 L281.3,15.8 L282.2,15.7 L283.1,14.9 L284.0,15.2 L284.9,15.3 L285.8,15.5 L286.7,15.3 L287.6,15.4 L288.5,15.4 L289.4,14.6 L290.3,15.6 L291.2,15.4 L292.1,15.6 L293.0,15.8 L293.9,15.5 L294.8,15.7 L295.7,15.3 L296.6,15.1 L297.5,15.6 L298.4,15.5 L299.3,15.3 L300.2,15.4 L301.1,14.5 L302.0,14.6 L302.9,14.5 L303.8,15.0 L304.7,15.1 L305.6,15.8 L306.5,15.6 L307.4,15.2 L308.3,15.3 L309.2,15.4 L310.1,15.7 L311.0,15.6 L311.9,15.6 L312.8,15.5 L313.7,15.6 L314.6,15.4 L315.5,14.9 L316.4,14.7 L317.3,15.2 L318.2,14.9 L319.1,15.4 L320.0,14.4 L320.9,15.6 L321.8,15.8 L322.7,15.5 L323.6,15.5 L324.5,15.3 L325.4,15.6 L326.3,15.4 L327.2,15.2 L328.1,15.6 L329.0,15.6 L329.9,15.0 L330.8,15.1 L331.7,15.0 L332.6,14.9 L333.5,15.6 L334.4,15.4 L335.3,15.8 L336.2,15.6 L337.1,15.6 L338.0,15.4 L338.9,15.7 L339.8,15.7 L340.7,15.8 L341.6,15.3 L342.5,15.0 L343.4,15.5 L344.3,15.8 L345.2,14.9 L346.1,15.6 L347.0,14.5 L347.9,15.0 L348.8,15.3 L349.7,14.6 L350.6,15.4 L351.5,15.2 L352.4,15.2 L353.3,15.6 L354.2,15.7 L355.1,15.5 L356.0,15.8 L356.9,15.2 L357.8,15.7 L358.7,15.1 L359.6,15.7 L360.5,15.4 L361.4,15.5 L362.3,15.2 L363.2,15.5 L364.1,15.3 L365.0,15.1 L365.9,15.4 L366.8,15.7 L367.7,15.0 L368.6,15.1 L369.5,15.8 L370.4,15.2 L371.3,15.1 L372.2,15.2 L373.1,15.8 L374.0,15.2 L374.9,15.4 L375.8,15.8 L376.7,14.4 L377.6,15.7 L378.5,15.6 L379.4,14.9 L380.3,15.8 L381.2,15.1 L382.1,15.2 L383.0,15.8 L383.9,15.1 L384.8,15.5 L385.7,15.3 L386.6,15.4 L387.5,15.1 L388.4,15.2 L389.3,15.2 L390.2,15.1 L391.1,14.9 L392.0,14.8 L392.9,15.3 L393.8,15.6 L394.7,15.5 L395.6,15.6 L396.5,15.8 L397.4,15.6 L398.3,15.6 L399.2,15.5 L400.1,15.1 L401.0,15.8 L401.9,15.2 L402.8,15.6 L403.7,15.5 L404.6,15.4 L405.5,14.8 L406.4,14.8 L407.3,15.2 L408.2,15.4 L409.1,14.9 L410.0,14.7 L410.9,14.9 L411.8,15.6 L412.7,15.6 L413.6,15.1 L414.5,15.8 L415.4,15.3 L416.3,15.4 L417.2,15.7 L418.1,15.1 L419.0,15.7 L419.9,15.6 L420.8,14.9 L421.7,15.4 L422.6,15.1 L423.5,14.9 L424.4,14.8 L425.3,15.6 L426.2,15.7 L427.1,15.6 L428.0,14.9 L428.9,15.4 L429.8,15.2 L430.7,15.7 L431.6,15.7 L432.5,15.7 L433.4,15.5 L434.3,15.4 L435.2,15.2 L436.1,14.5 L437.0,15.5 L437.9,15.7 L438.8,14.9 L439.7,14.9 L440.6,15.2 L441.5,15.1 L442.4,15.5 L443.3,15.5 L444.2,15.4 L445.1,15.4 L446.0,15.5 L446.9,15.4 L447.8,15.8 L448.7,15.4 L449.6,15.6 L450.5,15.2 L451.4,15.7 L452.3,14.4 L453.2,15.1 L454.1,14.5 L455.0,15.3 L455.9,15.7 L456.8,15.6 L457.7,15.7 L458.6,15.6 L459.5,15.4 L460.4,15.0 L461.3,15.8 L462.2,15.5 L463.1,15.8 L464.0,15.8 L464.9,15.2 L465.8,14.7 L466.7,15.6 L467.6,15.1 L468.5,14.1 L469.4,15.2 L470.3,15.8 L471.2,15.4 L472.1,15.8 L473.0,15.8 L473.9,15.8 L474.8,15.8 L475.7,15.4 L476.6,15.8 L477.5,15.0 L478.4,15.8 L479.3,15.1 L480.2,15.8 L481.1,15.1 L482.0,15.1 L482.9,15.1 L483.8,14.6 L484.7,15.2 L485.6,15.4 L486.5,15.3 L487.4,15.6 L488.3,15.0 L489.2,15.7 L490.1,15.0 L491.0,15.3 L491.9,15.8 L492.8,15.8 L493.7,15.4 L494.6,15.2 L495.5,15.5 L496.4,15.2 L497.3,14.7 L498.2,15.5 L499.1,15.1 L500.0,15.3 L500.9,15.2 L501.8,15.7 L502.7,15.4 L503.6,15.4 L504.5,15.6 L505.4,15.7 L506.3,15.2 L507.2,15.0 L508.1,15.2 L509.0,15.5 L509.9,15.7 L510.8,14.9 L511.7,14.6 L512.6,15.2 L513.5,14.2 L514.4,15.2 L515.3,15.6 L516.2,15.1 L517.1,15.7 L518.0,15.4 L518.9,15.5 L519.8,15.1 L520.7,15.2 L521.6,15.7 L522.5,15.8 L523.4,15.7 L524.3,15.6 L525.2,14.8 L526.1,15.1 L527.0,14.4 L527.9,14.6 L528.8,15.0 L529.7,14.6 L530.6,15.0 L531.5,15.7 L532.4,15.8 L533.3,15.5 L534.2,15.2 L535.1,15.8 L536.0,15.3 L536.9,15.0 L537.8,15.8 L538.7,15.5 L539.6,15.4 L540.5,15.4 L541.4,15.1 L542.3,14.8 L543.2,15.1 L544.1,15.1 L545.0,14.7 L545.9,15.1 L546.8,15.6 L547.7,15.6 L548.6,15.5 L549.5,15.8 L550.4,15.8 L551.3,15.8 L552.2,15.4 L553.1,15.7 L554.0,15.5 L554.9,15.7 L555.8,15.4 L556.7,14.9 L557.6,15.6 L558.5,14.7 L559.4,15.2 L560.3,15.7 L561.2,15.6 L562.1,15.8 L563.0,15.8 L563.9,14.9 L564.8,15.1 L565.7,15.6 L566.6,15.5 L567.5,15.7 L568.4,15.3 L569.3,15.6 L570.2,14.3 L571.1,14.3 L572.0,15.7 L572.9,15.6 L573.8,15.7 L574.7,14.7 L575.6,15.6 L576.5,15.0 L577.4,15.1 L578.3,15.8 L579.2,15.5 L580.1,15.7 L581.0,15.8 L581.9,15.0 L582.8,15.7 L583.7,15.5 L584.6,15.4 L585.5,14.4 L586.4,15.3 L587.3,14.9 L588.2,14.7 L589.1,15.6 L590.0,14.9 L590.9,15.1 L591.8,15.2 L592.7,15.8 L593.6,15.2 L594.5,15.3 L595.4,15.4 L596.3,14.9 L597.2,15.8 L598.1,15.8 L599.0,15.3 L599.9,15.0 L600.8,15.1 L601.7,14.8 L602.6,15.5 L603.5,15.6 L604.4,15.4 L605.3,15.7 L606.2,15.8 L607.1,15.4 L608.0,15.8 L608.9,15.3 L609.8,15.8 L610.7,15.8 L611.6,15.0 L612.5,15.8 L613.4,15.0 L614.3,15.1 L615.2,15.0 L616.1,15.5 L617.0,14.3 L617.9,15.0 L618.8,15.0 L619.7,15.0 L620.6,15.8 L621.5,15.8 L622.4,15.8 L623.3,15.3 L624.2,15.5 L625.1,15.8 L626.0,15.1 L626.9,15.7 L627.8,15.6 L628.7,15.8 L629.6,15.7 L630.5,14.9 L631.4,15.3 L632.3,14.9 L633.2,14.9 L634.1,15.0 L635.0,15.2 L635.9,15.6 L636.8,15.7 L637.7,15.7 L638.6,15.8 L639.5,15.7 L640.4,14.9 L641.3,14.9 L642.2,15.0 L643.1,15.8 L644.0,15.7 L644.9,15.1 L645.8,15.1 L646.7,14.8 L647.6,15.1 L648.5,15.6 L649.4,15.1 L650.3,15.6 L651.2,15.8 L652.1,15.6 L653.0,15.1 L653.9,15.8 L654.8,15.5 L655.7,15.8 L656.6,15.8 L657.5,15.3 L658.4,15.3 L659.3,15.8 L660.2,15.7 L661.1,15.0 L662.0,15.5 L662.9,14.8 L663.8,14.7 L664.7,15.7 L665.6,15.3 L666.5,15.7 L667.4,15.3 L668.3,15.8 L669.2,15.2 L670.1,15.7 L671.0,15.2 L671.9,15.1 L672.8,15.6 L673.7,15.8 L674.6,15.1 L675.5,14.8 L676.4,15.6 L677.3,14.8 L678.2,15.4 L679.1,15.5 L680.0,15.2 L680.9,15.6 L681.8,15.8 L682.7,15.3 L683.6,15.2 L684.5,15.1 L685.4,15.7 L686.3,15.3 L687.2,15.7 L688.1,15.3 L689.0,15.8 L689.9,15.1 L690.8,14.5 L691.7,15.1 L692.6,15.5 L693.5,14.8 L694.4,15.7 L695.3,15.7 L696.2,15.2 L697.1,15.8 L698.0,15.8 L698.9,15.4 L699.8,15.8 L700.7,15.8 L701.6,15.5 L702.5,15.5 L703.4,15.6 L704.3,15.4 L705.2,15.0 L706.1,15.3 L707.0,15.3 L707.9,15.3 L708.8,15.4 L709.7,15.3 L710.6,15.1 L711.5,15.8 L712.4,15.5 L713.3,15.3 L714.2,15.8 L715.1,15.2 L716.0,15.0 L716.9,15.7 L717.8,15.6 L718.7,15.2 L719.6,15.6 L720.5,14.8 L721.4,15.0 L722.3,15.4 L723.2,14.7 L724.1,14.4 L725.0,14.4 L725.9,15.8 L726.8,15.6 L727.7,15.0 L728.6,15.0 L729.5,15.7 L730.4,15.6 L731.3,15.4 L732.2,15.7 L733.1,15.5 L734.0,15.8 L734.9,15.6 L735.8,15.6 L736.7,14.9 L737.6,14.4 L738.5,14.7 L739.4,14.3 L740.3,15.8 L741.2,15.4 L742.1,15.7 L743.0,15.4 L743.9,15.7 L744.8,15.5 L745.7,15.0 L746.6,15.5 L747.5,15.7 L748.4,15.6 L749.3,15.6 L750.2,14.7 L751.1,15.1 L752.0,15.3 L752.9,14.5 L753.8,15.3 L754.7,15.4 L755.6,15.8 L756.5,15.8" fill="none" stroke="#606060" stroke-width="0.5"/>
<path d="M245.3,20.5 L246.2,20.7 L247.1,20.5 L248.0,20.2 L248.9,20.2 L249.8,20.2 L250.7,20.8 L251.6,20.1 L252.5,20.8 L253.4,20.1 L254.3,20.1 L255.2,21.0 L256.1,20.7 L257.0,21.0 L257.9,20.8 L258.8,21.3 L259.7,20.8 L260.6,20.2 L261.5,20.1 L262.4,20.7 L263.3,20.5 L264.2,20.6 L265.1,20.1 L266.0,20.3 L266.9,20.6 L267.8,20.4 L268.7,20.1 L269.6,20.3 L270.5,21.0 L271.4,20.4 L272.3,21.3 L273.2,20.3 L274.1,20.4 L275.0,20.5 L275.9,20.2 L276.8,20.1 L277.7,21.0 L278.6,20.6 L279.5,20.1 L280.4,20.9 L281.3,20.1 L282.2,20.2 L283.1,21.0 L284.0,20.7 L284.9,20.6 L285.8,20.4 L286.7,20.6 L287.6,20.5 L288.5,20.5 L289.4,21.3 L290.3,20.3 L291.2,20.5 L292.1,20.3 L293.0,20.1 L293.9,20.4 L294.8,20.2 L295.7,20.6 L296.6,20.8 L297.5,20.3 L298.4,20.4 L299.3,20.6 L300.2,20.5 L301.1,21.4 L302.0,21.3 L302.9,21.4 L303.8,20.9 L304.7,20.8 L305.6,20.1 L306.5,20.3 L307.4,20.7 L308.3,20.6 L309.2,20.5 L310.1,20.2 L311.0,20.3 L311.9,20.3 L312.8,20.4 L313.7,20.3 L314.6,20.5 L315.5,21.0 L316.4,21.2 L317.3,20.7 L318.2,21.0 L319.1,20.5 L320.0,21.5 L320.9,20.3 L321.8,20.1 L322.7,20.4 L323.6,20.4 L324.5,20.6 L325.4,20.3 L326.3,20.5 L327.2,20.7 L328.1,20.3 L329.0,20.3 L329.9,20.9 L330.8,20.8 L331.7,20.9 L332.6,21.0 L333.5,20.3 L334.4,20.5 L335.3,20.1 L336.2,20.3 L337.1,20.3 L338.0,20.5 L338.9,20.2 L339.8,20.2 L340.7,20.1 L341.6,20.6 L342.5,20.9 L343.4,20.4 L344.3,20.1 L345.2,21.0 L346.1,20.3 L347.0,21.4 L347.9,20.9 L348.8,20.6 L349.7,21.3 L350.6,20.5 L351.5,20.7 L352.4,20.7 L353.3,20.3 L354.2,20.2 L355.1,20.4 L356.0,20.1 L356.9,20.7 L357.8,20.2 L358.7,20.8 L359.6,20.2 L360.5,20.5 L361.4,20.4 L362.3,20.7 L363.2,20.4 L364.1,20.6 L365.0,20.8 L365.9,20.5 L366.8,20.2 L367.7,20.9 L368.6,20.8 L369.5,20.1 L370.4,20.7 L371.3,20.8 L372.2,20.7 L373.1,20.1 L374.0,20.7 L374.9,20.5 L375.8,20.1 L376.7,21.5 L377.6,20.2 L378.5,20.3 L379.4,21.0 L380.3,20.1 L381.2,20.8 L382.1,20.7 L383.0,20.1 L383.9,20.8 L384.8,20.4 L385.7,20.6 L386.6,20.5 L387.5,20.8 L388.4,20.7 L389.3,20.7 L390.2,20.8 L391.1,21.0 L392.0,21.1 L392.9,20.6 L393.8,20.3 L394.7,20.4 L395.6,20.3 L396.5,20.1 L397.4,20.3 L398.3,20.3 L399.2,20.4 L400.1,20.8 L401.0,20.1 L401.9,20.7 L402.8,20.3 L403.7,20.4 L404.6,20.5 L405.5,21.1 L406.4,21.1 L407.3,20.7 L408.2,20.5 L409.1,21.0 L410.0,21.2 L410.9,21.0 L411.8,20.3 L412.7,20.3 L413.6,20.8 L414.5,20.1 L415.4,20.6 L416.3,20.5 L417.2,20.2 L418.1,20.8 L419.0,20.2 L419.9,20.3 L420.8,21.0 L421.7,20.5 L422.6,20.8 L423.5,21.0 L424.4,21.1 L425.3,20.3 L426.2,20.2 L427.1,20.3 L428.0,21.0 L428.9,20.5 L429.8,20.7 L430.7,20.2 L431.6,20.2 L432.5,20.2 L433.4,20.4 L434.3,20.5 L435.2,20.7 L436.1,21.4 L437.0,20.4 L437.9,20.2 L438.8,21.0 L439.7,21.0 L440.6,20.7 L441.5,20.8 L442.4,20.4 L443.3,20.4 L444.2,20.5 L445.1,20.5 L446.0,20.4 L446.9,20.5 L447.8,20.1 L448.7,20.5 L449.6,20.3 L450.5,20.7 L451.4,20.2 L452.3,21.5 L453.2,20.8 L454.1,21.4 L455.0,20.6 L455.9,20.2 L456.8,20.3 L457.7,20.2 L458.6,20.3 L459.5,20.5 L460.4,20.9 L461.3,20.1 L462.2,20.4 L463.1,20.1 L464.0,20.1 L464.9,20.7 L465.8,21.2 L466.7,20.3 L467.6,20.8 L468.5,21.8 L469.4,20.7 L470.3,20.1 L471.2,20.5 L472.1,20.1 L473.0,20.1 L473.9,20.1 L474.8,20.1 L475.7,20.5 L476.6,20.1 L477.5,20.9 L478.4,20.1 L479.3,20.8 L480.2,20.1 L481.1,20.8 L482.0,20.8 L482.9,20.8 L483.8,21.3 L484.7,20.7 L485.6,20.5 L486.5,20.6 L487.4,20.3 L488.3,20.9 L489.2,20.2 L490.1,20.9 L491.0,20.6 L491.9,20.1 L492.8,20.1 L493.7,20.5 L494.6,20.7 L495.5,20.4 L496.4,20.7 L497.3,21.2 L498.2,20.4 L499.1,20.8 L500.0,20.6 L500.9,20.7 L501.8,20.2 L502.7,20.5 L503.6,20.5 L504.5,20.3 L505.4,20.2 L506.3,20.7 L507.2,20.9 L508.1,20.7 L509.0,20.4 L509.9,20.2 L510.8,21.0 L511.7,21.3 L512.6,20.7 L513.5,21.7 L514.4,20.7 L515.3,20.3 L516.2,20.8 L517.1,20.2 L518.0,20.5 L518.9,20.4 L519.8,20.8 L520.7,20.7 L521.6,20.2 L522.5,20.1 L523.4,20.2 L524.3,20.3 L525.2,21.1 L526.1,20.8 L527.0,21.5 L527.9,21.3 L528.8,20.9 L529.7,21.3 L530.6,20.9 L531.5,20.2 L532.4,20.1 L533.3,20.4 L534.2,20.7 L535.1,20.1 L536.0,20.6 L536.9,20.9 L537.8,20.1 L538.7,20.4 L539.6,20.5 L540.5,20.5 L541.4,20.8 L542.3,21.1 L543.2,20.8 L544.1,20.8 L545.0,21.2 L545.9,20.8 L546.8,20.3 L547.7,20.3 L548.6,20.4 L549.5,20.1 L550.4,20.1 L551.3,20.1 L552.2,20.5 L553.1,20.2 L554.0,20.4 L554.9,20.2 L555.8,20.5 L556.7,21.0 L557.6,20.3 L558.5,21.2 L559.4,20.7 L560.3,20.2 L561.2,20.3 L562.1,20.1 L563.0,20.1 L563.9,21.0 L564.8,20.8 L565.7,20.3 L566.6,20.4 L567.5,20.2 L568.4,20.6 L569.3,20.3 L570.2,21.6 L571.1,21.6 L572.0,20.2 L572.9,20.3 L573.8,20.2 L574.7,21.2 L575.6,20.3 L576.5,20.9 L577.4,20.8 L578.3,20.1 L579.2,20.4 L580.1,20.2 L581.0,20.1 L581.9,20.9 L582.8,20.2 L583.7,20.4 L584.6,20.5 L585.5,21.5 L586.4,20.6 L587.3,21.0 L588.2,21.2 L589.1,20.3 L590.0,21.0 L590.9,20.8 L591.8,20.7 L592.7,20.1 L593.6,20.7 L594.5,20.6 L595.4,20.5 L596.3,21.0 L597.2,20.1 L598.1,20.1 L599.0,20.6 L599.9,20.9 L600.8,20.8 L601.7,21.1 L602.6,20.4 L603.5,20.3 L604.4,20.5 L605.3,20.2 L606.2,20.1 L607.1,20.5 L608.0,20.1 L608.9,20.6 L609.8,20.1 L610.7,20.1 L611.6,20.9 L612.5,20.1 L613.4,20.9 L614.3,20.8 L615.2,20.9 L616.1,20.4 L617.0,21.6 L617.9,20.9 L618.8,20.9 L619.7,20.9 L620.6,20.1 L621.5,20.1 L622.4,20.1 L623.3,20.6 L624.2,20.4 L625.1,20.1 L626.0,20.8 L626.9,20.2 L627.8,20.3 L628.7,20.1 L629.6,20.2 L630.5,21.0 L631.4,20.6 L632.3,21.0 L633.2,21.0 L634.1,20.9 L635.0,20.7 L635.9,20.3 L636.8,20.2 L637.7,20.2 L638.6,20.1 L639.5,20.2 L640.4,21.0 L641.3,21.0 L642.2,20.9 L643.1,20.1 L644.0,20.2 L644.9,20.8 L645.8,20.8 L646.7,21.1 L647.6,20.8 L648.5,20.3 L649.4,20.8 L650.3,20.3 L651.2,20.1 L652.1,20.3 L653.0,20.8 L653.9,20.1 L654.8,20.4 L655.7,20.1 L656.6,20.1 L657.5,20.6 L658.4,20.6 L659.3,20.1 L660.2,20.2 L661.1,20.9 L662.0,20.4 L662.9,21.1 L663.8,21.2 L664.7,20.2 L665.6,20.6 L666.5,20.2 L667.4,20.6 L668.3,20.1 L669.2,20.7 L670.1,20.2 L671.0,20.7 L671.9,20.8 L672.8,20.3 L673.7,20.1 L674.6,20.8 L675.5,21.1 L676.4,20.3 L677.3,21.1 L678.2,20.5 L679.1,20.4 L680.0,20.7 L680.9,20.3 L681.8,20.1 L682.7,20.6 L683.6,20.7 L684.5,20.8 L685.4,20.2 L686.3,20.6 L687.2,20.2 L688.1,20.6 L689.0,20.1 L689.9,20.8 L690.8,21.4 L691.7,20.8 L692.6,20.4 L693.5,21.1 L694.4,20.2 L695.3,20.2 L696.2,20.7 L697.1,20.1 L698.0,20.1 L698.9,20.5 L699.8,20.1 L700.7,20.1 L701.6,20.4 L702.5,20.4 L703.4,20.3 L704.3,20.5 L705.2,20.9 L706.1,20.6 L707.0,20.6 L707.9,20.6 L708.8,20.5 L709.7,20.6 L710.6,20.8 L711.5,20.1 L712.4,20.4 L713.3,20.6 L714.2,20.1 L715.1,20.7 L716.0,20.9 L716.9,20.2 L717.8,20.3 L718.7,20.7 L719.6,20.3 L720.5,21.1 L721.4,20.9 L722.3,20.5 L723.2,21.2 L724.1,21.5 L725.0,21.5 L725.9,20.1 L726.8,20.3 L727.7,20.9 L728.6,20.9 L729.5,20.2 L730.4,20.3 L731.3,20.5 L732.2,20.2 L733.1,20.4 L734.0,20.1 L734.9,20.3 L735.8,20.3 L736.7,21.0 L737.6,21.5 L738.5,21.2 L739.4,21.6 L740.3,20.1 L741.2,20.5 L742.1,20.2 L743.0,20.5 L743.9,20.2 L744.8,20.4 L745.7,20.9 L746.6,20.4 L747.5,20.2 L748.4,20.3 L749.3,20.3 L750.2,21.2 L751.1,20.8 L752.0,20.6 L752.9,21.4 L753.8,20.6 L754.7,20.5 L755.6,20.1 L756.5,20.1" fill="none" stroke="#606060" stroke-width="0.5"/>
<clipPath id="cb"><rect width="245.3" height="35.5"/></clipPath>
<g clip-path="url(#cb)"><path d="M0.0,17.9 L0.8,17.7 L1.6,17.4 L2.4,17.2 L3.2,17.1 L4.0,17.1 L4.8,16.8 L5.6,16.0 L6.4,16.7 L7.2,16.6 L8.0,16.2 L8.8,15.6 L9.6,16.3 L10.4,16.5 L11.2,15.6 L12.0,16.7 L12.8,15.8 L13.6,16.5 L14.4,16.4 L15.2,15.7 L16.0,15.7 L16.8,16.0 L17.6,16.6 L18.4,16.6 L19.2,16.1 L20.0,16.5 L20.8,16.6 L21.6,16.3 L22.4,16.5 L23.2,16.6 L24.0,15.9 L24.8,16.1 L25.6,16.6 L26.4,16.3 L27.2,15.5 L28.0,15.8 L28.8,15.4 L29.6,15.7 L30.4,16.2 L31.2,16.0 L32.0,16.0 L32.8,16.3 L33.6,15.8 L34.4,16.6 L35.2,16.1 L36.0,16.3 L36.8,16.3 L37.6,16.5 L38.4,15.9 L39.2,15.6 L40.0,16.4 L40.8,16.1 L41.6,15.5 L42.4,14.7 L43.2,16.2 L44.0,16.1 L44.8,16.3 L45.6,16.7 L46.4,16.7 L47.2,16.0 L48.0,16.7 L48.8,16.6 L49.6,16.5 L50.4,15.8 L51.2,16.7 L52.0,16.5 L52.8,16.3 L53.6,15.8 L54.4,15.0 L55.2,16.2 L56.0,15.7 L56.8,15.4 L57.6,16.4 L58.4,16.1 L59.2,16.3 L60.0,16.6 L60.8,16.7 L61.6,16.5 L62.4,16.5 L63.2,16.3 L64.0,15.6 L64.8,16.1 L65.6,16.4 L66.4,16.2 L67.2,16.2 L68.0,15.8 L68.8,15.1 L69.6,15.5 L70.4,16.4 L71.2,16.2 L72.0,16.5 L72.8,16.7 L73.6,16.6 L74.4,16.7 L75.2,16.7 L76.0,16.7 L76.8,16.7 L77.6,16.5 L78.4,16.7 L79.2,15.8 L80.0,16.2 L80.8,16.7 L81.6,16.3 L82.4,16.4 L83.2,14.8 L84.0,16.0 L84.8,16.6 L85.6,16.6 L86.4,16.6 L87.2,15.9 L88.0,16.7 L88.8,16.7 L89.6,15.6 L90.4,16.4 L91.2,16.7 L92.0,16.3 L92.8,16.7 L93.6,16.4 L94.4,15.6 L95.2,15.1 L96.0,16.3 L96.8,15.9 L97.6,15.6 L98.4,16.3 L99.2,15.9 L100.0,15.5 L100.8,15.8 L101.6,15.9 L102.4,15.9 L103.2,16.0 L104.0,16.6 L104.8,16.4 L105.6,16.5 L106.4,16.7 L107.2,16.7 L108.0,16.6 L108.8,15.9 L109.6,15.2 L110.4,14.7 L111.2,15.2 L112.0,16.4 L112.8,16.7 L113.6,16.6 L114.4,16.2 L115.2,15.7 L116.0,15.9 L116.8,16.4 L117.6,16.2 L118.4,15.9 L119.2,16.7 L120.0,16.2 L120.8,15.7 L121.6,15.2 L122.4,16.2 L123.2,15.6 L124.0,15.0 L124.8,16.1 L125.6,14.9 L126.4,16.7 L127.2,16.7 L128.0,16.7 L128.8,15.7 L129.6,15.9 L130.4,16.7 L131.2,15.9 L132.0,15.5 L132.8,16.2 L133.6,16.6 L134.4,16.3 L135.2,16.7 L136.0,14.9 L136.8,15.4 L137.6,15.6 L138.4,15.7 L139.2,16.3 L140.0,16.6 L140.8,16.3 L141.6,16.6 L142.4,16.5 L143.2,16.7 L144.0,15.7 L144.8,16.5 L145.6,16.4 L146.4,16.3 L147.2,15.7 L148.0,16.5 L148.8,15.2 L149.6,15.8 L150.4,16.3 L151.2,16.7 L152.0,15.8 L152.8,15.7 L153.6,16.3 L154.4,16.6 L155.2,16.4 L156.0,16.3 L156.8,16.0 L157.6,16.7 L158.4,16.3 L159.2,16.6 L160.0,16.6 L160.8,16.0 L161.6,16.4 L162.4,15.6 L163.2,15.3 L164.0,15.7 L164.8,15.7 L165.6,15.9 L166.4,15.5 L167.2,16.1 L168.0,15.8 L168.8,15.6 L169.6,16.6 L170.4,16.3 L171.2,15.6 L172.0,15.9 L172.8,16.7 L173.6,16.7 L174.4,16.5 L175.2,16.7 L176.0,16.6 L176.8,15.4 L177.6,15.6 L178.4,15.4 L179.2,15.8 L180.0,15.6 L180.8,16.6 L181.6,15.6 L182.4,16.5 L183.2,16.4 L184.0,15.5 L184.8,15.9 L185.6,16.7 L186.4,16.5 L187.2,16.4 L188.0,16.6 L188.8,16.7 L189.6,15.9 L190.4,16.1 L191.2,16.4 L192.0,15.9 L192.8,16.3 L193.6,15.5 L194.4,16.0 L195.2,15.6 L196.0,16.7 L196.8,16.6 L197.6,16.7 L198.4,16.0 L199.2,16.6 L200.0,16.7 L200.8,16.5 L201.6,15.7 L202.4,15.9 L203.2,16.5 L204.0,15.1 L204.8,16.0 L205.6,16.0 L206.4,16.4 L207.2,15.6 L208.0,16.2 L208.8,15.9 L209.6,16.7 L210.4,15.8 L211.2,16.7 L212.0,15.8 L212.8,16.5 L213.6,16.6 L214.4,16.3 L215.2,15.7 L216.0,16.5 L216.8,16.1 L217.6,16.5 L218.4,16.5 L219.2,16.3 L220.0,15.7 L220.8,16.4 L221.6,16.7 L222.4,16.6 L223.2,16.7 L224.0,16.6 L224.8,16.7 L225.6,16.1 L226.4,16.3 L227.2,16.7 L228.0,16.4 L228.8,15.7 L229.6,15.9 L230.4,16.0 L231.2,15.5 L232.0,15.7 L232.8,15.2 L233.6,15.2 L234.4,16.2 L235.2,16.5 L236.0,16.6 L236.8,16.7 L237.6,16.7 L238.4,16.7 L239.2,16.0 L240.0,16.6 L240.8,16.7 L241.6,16.7 L242.4,15.9 L243.2,15.1 L244.0,16.4 L244.8,16.1 L245.6,16.2 L246.4,15.7 L247.2,15.0 L248.0,16.6 L248.8,15.6 L249.6,16.6 L250.4,16.5 L251.2,16.7 L252.0,16.5 L252.8,16.4 L253.6,16.4 L254.4,16.7 L255.2,16.4 L256.0,16.7 L256.8,16.5 L257.6,16.5 L258.4,16.4 L259.2,16.0 L260.0,15.6 L260.8,15.5 L261.6,15.8 L262.4,16.5 L263.2,16.6 L264.0,15.5 L264.8,16.7 L265.6,16.1 L266.4,16.2 L267.2,16.7 L268.0,15.9 L268.8,15.7 L269.6,16.2 L270.4,15.2 L271.2,16.2 L272.0,15.6 L272.8,15.1 L273.6,15.4 L274.4,15.4 L275.2,16.6 L276.0,16.7 L276.8,16.7 L277.6,16.5 L278.4,16.7 L279.2,15.9 L280.0,16.3 L280.8,16.2 L281.6,16.2 L282.4,16.1 L283.2,16.4 L284.0,15.9 L284.8,15.5 L285.6,15.7 L286.4,16.0 L287.2,16.5 L288.0,16.6 L288.8,16.1 L289.6,16.6 L290.4,16.0 L291.2,15.6 L292.0,16.4 L292.8,16.5 L293.6,16.4 L294.4,16.1 L295.2,16.0 L296.0,16.2 L296.8,16.2 L297.6,16.5 L298.4,15.9 L299.2,16.0 L300.0,16.6 L300.8,15.9 L301.6,16.1 L302.4,16.2 L303.2,16.6 L304.0,16.4 L304.8,16.4 L305.6,16.4 L306.4,16.7 L307.2,15.7 L308.0,16.7 L308.8,15.6 L309.6,15.6 L310.4,16.7 L311.2,15.6 L312.0,15.1 L312.8,16.4 L313.6,15.4 L314.4,16.2 L315.2,16.4 L316.0,15.6 L316.8,16.7 L317.6,15.9 L318.4,16.4 L319.2,15.8 L320.0,16.1 L320.8,16.6 L321.6,15.7 L322.4,16.4 L323.2,16.7 L324.0,16.2 L324.8,16.2 L325.6,16.3 L326.4,15.7 L327.2,15.9 L328.0,15.7 L328.8,15.7 L329.6,16.1 L330.4,15.7 L331.2,16.6 L332.0,16.5 L332.8,16.5 L333.6,15.5 L334.4,16.3 L335.2,16.5 L336.0,16.5 L336.8,16.6 L337.6,16.6 L338.4,15.6 L339.2,15.4 L340.0,16.1 L340.8,16.3 L341.6,14.7 L342.4,15.9 L343.2,16.2 L344.0,15.7 L344.8,15.6 L345.6,16.3 L346.4,16.1 L347.2,16.7 L348.0,16.1 L348.8,16.5 L349.6,16.0 L350.4,16.2 L351.2,16.6 L352.0,15.5 L352.8,16.1 L353.6,15.9 L354.4,15.3 L355.2,15.9 L356.0,16.3 L356.8,16.5 L357.6,16.7 L358.4,16.7 L359.2,16.6 L360.0,15.7 L360.8,16.4 L361.6,16.6 L362.4,15.7 L363.2,15.5 L364.0,16.5 L364.8,16.5 L365.6,16.3 L366.4,16.5 L367.2,16.1 L368.0,15.0 L368.8,16.1 L369.6,16.4 L370.4,16.5 L371.2,16.6 L372.0,16.7 L372.8,16.6 L373.6,15.6 L374.4,16.7 L375.2,16.4 L376.0,16.2 L376.8,15.8 L377.6,16.6 L378.4,16.4 L379.2,16.1 L380.0,14.8 L380.8,15.8 L381.6,16.0 L382.4,15.3 L383.2,16.3 L384.0,16.7 L384.8,16.5 L385.6,15.7 L386.4,15.9 L387.2,15.8 L388.0,15.6 L388.8,16.6 L389.6,16.7 L390.4,16.7 L391.2,16.4 L392.0,15.2 L392.8,15.4 L393.6,15.5 L394.4,16.3 L395.2,15.7 L396.0,15.7 L396.8,16.2 L397.6,16.6 L398.4,16.7 L399.2,16.6 L400.0,16.2 L400.8,16.1 L401.6,16.7 L402.4,16.7 L403.2,16.4 L404.0,16.3 L404.8,16.5 L405.6,16.0 L406.4,16.4 L407.2,15.5 L408.0,15.3 L408.8,16.2 L409.6,16.6 L410.4,15.6 L411.2,16.1 L412.0,16.6 L412.8,16.7 L413.6,16.4 L414.4,16.2 L415.2,16.5 L416.0,16.6 L416.8,16.2 L417.6,15.7 L418.4,16.6 L419.2,16.4 L420.0,15.8 L420.8,15.9 L421.6,15.5 L422.4,15.7 L423.2,16.6 L424.0,15.9 L424.8,16.6 L425.6,16.6 L426.4,16.0 L427.2,16.6 L428.0,15.6 L428.8,16.4 L429.6,16.7 L430.4,16.6 L431.2,16.5 L432.0,15.2 L432.8,16.3 L433.6,15.7 L434.4,16.6 L435.2,16.3 L436.0,14.8 L436.8,16.1 L437.6,15.5 L438.4,15.7 L439.2,16.6 L440.0,16.7 L440.8,15.6 L441.6,16.0 L442.4,16.7 L443.2,16.2 L444.0,16.5 L444.8,16.5 L445.6,16.4 L446.4,16.4 L447.2,15.6 L448.0,15.7 L448.8,16.3 L449.6,15.1 L450.4,16.5 L451.2,16.7 L452.0,16.4 L452.8,16.5 L453.6,15.7 L454.4,16.7 L455.2,16.5 L456.0,15.7 L456.8,16.7 L457.6,16.5 L458.4,15.9 L459.2,16.0 L460.0,16.6 L460.8,15.4 L461.6,15.1 L462.4,16.3 L463.2,15.0 L464.0,16.6 L464.8,16.1 L465.6,16.6 L466.4,16.6 L467.2,16.7 L468.0,16.0 L468.8,15.7 L469.6,16.2 L470.4,15.6 L471.2,16.7 L472.0,16.6 L472.8,15.5 L473.6,15.2 L474.4,16.2 L475.2,15.5 L476.0,15.9 L476.8,15.2 L477.6,16.0 L478.4,16.3 L479.2,16.6 L480.0,16.6 L480.8,16.5 L481.6,16.0 L482.4,16.7 L483.2,16.7 L484.0,16.0 L484.8,16.6 L485.6,16.7 L486.4,16.1 L487.2,15.6 L488.0,14.8 L488.8,16.5 L489.6,16.2 L490.4,15.6 L491.2,16.6 L492.0,16.5 L492.8,16.2 L493.6,16.2 L494.4,16.0 L495.2,15.8 L496.0,16.2 L496.8,16.7 L497.6,15.9 L498.4,16.6 L499.2,16.3 L500.0,15.8 L500.8,16.4 L501.6,16.5 L502.4,15.2 L503.2,16.2 L504.0,15.5 L504.8,16.4 L505.6,16.6 L506.4,15.9 L507.2,16.2 L508.0,15.5 L508.8,16.7 L509.6,16.4 L510.4,15.9 L511.2,15.9 L512.0,15.7 L512.8,16.7 L513.6,16.5 L514.4,15.7 L515.2,15.4 L516.0,15.7 L516.8,16.2 L517.6,16.0 L518.4,15.6 L519.2,16.7 L520.0,16.3 L520.8,16.2 L521.6,16.6 L522.4,16.5 L523.2,16.7 L524.0,16.7 L524.8,16.6 L525.6,16.3 L526.4,16.2 L527.2,16.6 L528.0,15.9 L528.8,16.3 L529.6,15.9 L530.4,16.3 L531.2,16.7 L532.0,16.5 L532.8,16.3 L533.6,16.2 L534.4,16.7 L535.2,16.7 L536.0,16.1 L536.8,16.5 L537.6,16.6 L538.4,16.6 L539.2,15.6 L540.0,16.0 L540.8,16.1 L541.6,14.8 L542.4,16.3 L543.2,15.9 L544.0,15.8 L544.8,16.5 L545.6,15.9 L546.4,16.5 L547.2,15.8 L548.0,16.4 L548.8,16.7 L549.6,16.7 L550.4,16.3 L551.2,16.2 L552.0,15.7 L552.8,16.7 L553.6,15.9 L554.4,16.2 L555.2,16.1 L556.0,15.6 L556.8,15.6 L557.6,15.4 L558.4,16.7 L559.2,15.6 L560.0,15.6 L560.8,16.4 L561.6,16.7 L562.4,15.7 L563.2,16.5 L564.0,15.7 L564.8,16.2 L565.6,15.9 L566.4,16.7 L567.2,15.7 L568.0,15.7 L568.8,15.7 L569.6,16.2 L570.4,16.0 L571.2,16.4 L572.0,16.1 L572.8,15.7 L573.6,16.7 L574.4,16.3 L575.2,16.0 L576.0,16.7 L576.8,15.9 L577.6,16.7 L578.4,16.3 L579.2,16.3 L580.0,16.2 L580.8,16.2 L581.6,15.9 L582.4,15.7 L583.2,16.4 L584.0,15.8 L584.8,15.9 L585.6,16.0 L586.4,16.4 L587.2,16.7 L588.0,16.4 L588.8,16.7 L589.6,16.7 L590.4,16.5 L591.2,16.7 L592.0,16.5 L592.8,16.4 L593.6,16.7 L594.4,16.1 L595.2,15.3 L596.0,16.3 L596.8,16.0 L597.6,15.5 L598.4,14.8 L599.2,16.1 L600.0,15.9 L600.8,16.7 L601.6,15.5 L602.4,16.4 L603.2,15.6 L604.0,15.7 L604.8,16.7 L605.6,16.0 L606.4,15.7 L607.2,16.7 L608.0,15.8 L608.8,15.8 L609.6,15.8 L610.4,16.2 L611.2,15.5 L612.0,16.1 L612.8,16.6 L613.6,16.7 L614.4,16.7 L615.2,16.7 L616.0,15.6 L616.8,16.1 L617.6,15.7 L618.4,16.7 L619.2,16.0 L620.0,16.7 L620.8,16.4 L621.6,15.9 L622.4,15.2 L623.2,15.4 L624.0,15.7 L624.8,15.8 L625.6,15.9 L626.4,16.6 L627.2,15.5 L628.0,16.3 L628.8,16.5 L629.6,16.0 L630.4,16.5 L631.2,16.7 L632.0,16.0 L632.8,16.7 L633.6,15.9 L634.4,16.6 L635.2,15.2 L636.0,15.6 L636.8,16.6 L637.6,16.5 L638.4,15.8 L639.2,16.4 L640.0,15.7 L640.8,16.7 L641.6,16.6 L642.4,16.2 L643.2,16.7 L644.0,16.7 L644.8,16.5 L645.6,16.7 L646.4,16.5 L647.2,16.6 L648.0,16.3 L648.8,16.1 L649.6,15.8 L650.4,15.7 L651.2,16.5 L652.0,16.1 L652.8,15.8 L653.6,16.0 L654.4,16.5 L655.2,16.6 L656.0,16.7 L656.8,16.2 L657.6,16.3 L658.4,16.6 L659.2,16.2 L660.0,16.5 L660.8,15.6 L661.6,15.8 L662.4,15.7 L663.2,16.0 L664.0,16.6 L664.8,16.0 L665.6,15.4 L666.4,16.7 L667.2,16.7 L668.0,16.3 L668.8,16.4 L669.6,16.2 L670.4,15.9 L671.2,16.7 L672.0,16.6 L672.8,16.6 L673.6,16.7 L674.4,15.8 L675.2,15.2 L676.0,15.9 L676.8,15.6 L677.6,15.6 L678.4,16.5 L679.2,16.6 L680.0,16.6 L680.8,16.0 L681.6,16.1 L682.4,15.8 L683.2,16.1 L684.0,16.6 L684.8,16.3 L685.6,16.5 L686.4,16.0 L687.2,16.4 L688.0,16.6 L688.8,15.2 L689.6,15.8 L690.4,16.4 L691.2,15.9 L692.0,14.9 L692.8,15.7 L693.6,16.6 L694.4,16.6 L695.2,15.7 L696.0,16.2 L696.8,16.1 L697.6,16.2 L698.4,15.5 L699.2,16.4 L700.0,15.9 L700.8,16.1 L701.6,15.8 L702.4,15.7 L703.2,16.0 L704.0,16.0 L704.8,15.8 L705.6,16.6 L706.4,15.8 L707.2,16.6 L708.0,16.7 L708.8,16.7 L709.6,16.7 L710.4,16.1 L711.2,16.2 L712.0,16.1 L712.8,16.0 L713.6,16.7 L714.4,16.3 L715.2,16.5 L716.0,15.1 L716.8,15.7 L717.6,14.9 L718.4,15.5 L719.2,16.5 L720.0,15.9 L720.8,15.9 L721.6,16.2 L722.4,15.9 L723.2,16.2 L724.0,16.6 L724.8,16.7 L725.6,16.7 L726.4,16.0 L727.2,16.6 L728.0,16.6 L728.8,16.5 L729.6,16.4 L730.4,15.9 L731.2,16.2 L732.0,15.1 L732.8,15.2 L733.6,16.7 L734.4,16.5 L735.2,16.5 L736.0,16.0 L736.8,16.6 L737.6,16.1 L738.4,16.4 L739.2,16.6 L740.0,15.8 L740.8,16.7 L741.6,15.9 L742.4,16.7 L743.2,16.5 L744.0,15.0 L744.8,16.2 L745.6,15.6 L746.4,16.2 L747.2,16.6 L748.0,15.9 L748.8,16.6 L749.6,15.6 L750.4,16.6 L751.2,16.6 L752.0,16.1 L752.8,16.4 L753.6,16.7 L754.4,16.2 L755.2,16.7 L756.0,16.0 L756.0,19.9 L755.2,19.2 L754.4,19.7 L753.6,19.2 L752.8,19.5 L752.0,19.8 L751.2,19.3 L750.4,19.3 L749.6,20.3 L748.8,19.3 L748.0,20.0 L747.2,19.3 L746.4,19.7 L745.6,20.3 L744.8,19.7 L744.0,20.9 L743.2,19.4 L742.4,19.2 L741.6,20.0 L740.8,19.2 L740.0,20.1 L739.2,19.3 L738.4,19.5 L737.6,19.8 L736.8,19.3 L736.0,19.9 L735.2,19.4 L734.4,19.4 L733.6,19.2 L732.8,20.7 L732.0,20.8 L731.2,19.7 L730.4,20.0 L729.6,19.5 L728.8,19.4 L728.0,19.3 L727.2,19.3 L726.4,19.9 L725.6,19.2 L724.8,19.2 L724.0,19.3 L723.2,19.7 L722.4,20.0 L721.6,19.7 L720.8,20.0 L720.0,20.0 L719.2,19.4 L718.4,20.4 L717.6,21.0 L716.8,20.2 L716.0,20.8 L715.2,19.4 L714.4,19.6 L713.6,19.2 L712.8,19.9 L712.0,19.8 L711.2,19.7 L710.4,19.8 L709.6,19.2 L708.8,19.2 L708.0,19.2 L707.2,19.3 L706.4,20.1 L705.6,19.3 L704.8,20.1 L704.0,19.9 L703.2,19.9 L702.4,20.2 L701.6,20.1 L700.8,19.8 L700.0,20.0 L699.2,19.5 L698.4,20.4 L697.6,19.7 L696.8,19.8 L696.0,19.7 L695.2,20.2 L694.4,19.3 L693.6,19.3 L692.8,20.2 L692.0,21.0 L691.2,20.0 L690.4,19.5 L689.6,20.1 L688.8,20.7 L688.0,19.3 L687.2,19.5 L686.4,19.9 L685.6,19.4 L684.8,19.6 L684.0,19.3 L683.2,19.8 L682.4,20.1 L681.6,19.8 L680.8,19.9 L680.0,19.3 L679.2,19.3 L678.4,19.4 L677.6,20.3 L676.8,20.3 L676.0,20.0 L675.2,20.7 L674.4,20.1 L673.6,19.2 L672.8,19.3 L672.0,19.3 L671.2,19.2 L670.4,20.0 L669.6,19.7 L668.8,19.5 L668.0,19.6 L667.2,19.2 L666.4,19.2 L665.6,20.5 L664.8,19.9 L664.0,19.3 L663.2,19.9 L662.4,20.2 L661.6,20.1 L660.8,20.3 L660.0,19.4 L659.2,19.7 L658.4,19.3 L657.6,19.6 L656.8,19.7 L656.0,19.2 L655.2,19.3 L654.4,19.4 L653.6,19.9 L652.8,20.1 L652.0,19.8 L651.2,19.4 L650.4,20.2 L649.6,20.1 L648.8,19.8 L648.0,19.6 L647.2,19.3 L646.4,19.4 L645.6,19.2 L644.8,19.4 L644.0,19.2 L643.2,19.2 L642.4,19.7 L641.6,19.3 L640.8,19.2 L640.0,20.2 L639.2,19.5 L638.4,20.1 L637.6,19.4 L636.8,19.3 L636.0,20.3 L635.2,20.7 L634.4,19.3 L633.6,20.0 L632.8,19.2 L632.0,19.9 L631.2,19.2 L630.4,19.4 L629.6,19.9 L628.8,19.4 L628.0,19.6 L627.2,20.4 L626.4,19.3 L625.6,20.0 L624.8,20.1 L624.0,20.2 L623.2,20.5 L622.4,20.7 L621.6,20.0 L620.8,19.5 L620.0,19.2 L619.2,19.9 L618.4,19.2 L617.6,20.2 L616.8,19.8 L616.0,20.3 L615.2,19.2 L614.4,19.2 L613.6,19.2 L612.8,19.3 L612.0,19.8 L611.2,20.4 L610.4,19.7 L609.6,20.1 L608.8,20.1 L608.0,20.1 L607.2,19.2 L606.4,20.2 L605.6,19.9 L604.8,19.2 L604.0,20.2 L603.2,20.3 L602.4,19.5 L601.6,20.4 L600.8,19.2 L600.0,20.0 L599.2,19.8 L598.4,21.1 L597.6,20.4 L596.8,19.9 L596.0,19.6 L595.2,20.6 L594.4,19.8 L593.6,19.2 L592.8,19.5 L592.0,19.4 L591.2,19.2 L590.4,19.4 L589.6,19.2 L588.8,19.2 L588.0,19.5 L587.2,19.2 L586.4,19.5 L585.6,19.9 L584.8,20.0 L584.0,20.1 L583.2,19.5 L582.4,20.2 L581.6,20.0 L580.8,19.7 L580.0,19.7 L579.2,19.6 L578.4,19.6 L577.6,19.2 L576.8,20.0 L576.0,19.2 L575.2,19.9 L574.4,19.6 L573.6,19.2 L572.8,20.2 L572.0,19.8 L571.2,19.5 L570.4,19.9 L569.6,19.7 L568.8,20.2 L568.0,20.2 L567.2,20.2 L566.4,19.2 L565.6,20.0 L564.8,19.7 L564.0,20.2 L563.2,19.4 L562.4,20.2 L561.6,19.2 L560.8,19.5 L560.0,20.3 L559.2,20.3 L558.4,19.2 L557.6,20.5 L556.8,20.3 L556.0,20.3 L555.2,19.8 L554.4,19.7 L553.6,20.0 L552.8,19.2 L552.0,20.2 L551.2,19.7 L550.4,19.6 L549.6,19.2 L548.8,19.2 L548.0,19.5 L547.2,20.1 L546.4,19.4 L545.6,20.0 L544.8,19.4 L544.0,20.1 L543.2,20.0 L542.4,19.6 L541.6,21.1 L540.8,19.8 L540.0,19.9 L539.2,20.3 L538.4,19.3 L537.6,19.3 L536.8,19.4 L536.0,19.8 L535.2,19.2 L534.4,19.2 L533.6,19.7 L532.8,19.6 L532.0,19.4 L531.2,19.2 L530.4,19.6 L529.6,20.0 L528.8,19.6 L528.0,20.0 L527.2,19.3 L526.4,19.7 L525.6,19.6 L524.8,19.3 L524.0,19.2 L523.2,19.2 L522.4,19.4 L521.6,19.3 L520.8,19.7 L520.0,19.6 L519.2,19.2 L518.4,20.3 L517.6,19.9 L516.8,19.7 L516.0,20.2 L515.2,20.5 L514.4,20.2 L513.6,19.4 L512.8,19.2 L512.0,20.2 L511.2,20.0 L510.4,20.0 L509.6,19.5 L508.8,19.2 L508.0,20.4 L507.2,19.7 L506.4,20.0 L505.6,19.3 L504.8,19.5 L504.0,20.4 L503.2,19.7 L502.4,20.7 L501.6,19.4 L500.8,19.5 L500.0,20.1 L499.2,19.6 L498.4,19.3 L497.6,20.0 L496.8,19.2 L496.0,19.7 L495.2,20.1 L494.4,19.9 L493.6,19.7 L492.8,19.7 L492.0,19.4 L491.2,19.3 L490.4,20.3 L489.6,19.7 L488.8,19.4 L488.0,21.1 L487.2,20.3 L486.4,19.8 L485.6,19.2 L484.8,19.3 L484.0,19.9 L483.2,19.2 L482.4,19.2 L481.6,19.9 L480.8,19.4 L480.0,19.3 L479.2,19.3 L478.4,19.6 L477.6,19.9 L476.8,20.7 L476.0,20.0 L475.2,20.4 L474.4,19.7 L473.6,20.7 L472.8,20.4 L472.0,19.3 L471.2,19.2 L470.4,20.3 L469.6,19.7 L468.8,20.2 L468.0,19.9 L467.2,19.2 L466.4,19.3 L465.6,19.3 L464.8,19.8 L464.0,19.3 L463.2,20.9 L462.4,19.6 L461.6,20.8 L460.8,20.5 L460.0,19.3 L459.2,19.9 L458.4,20.0 L457.6,19.4 L456.8,19.2 L456.0,20.2 L455.2,19.4 L454.4,19.2 L453.6,20.2 L452.8,19.4 L452.0,19.5 L451.2,19.2 L450.4,19.4 L449.6,20.8 L448.8,19.6 L448.0,20.2 L447.2,20.3 L446.4,19.5 L445.6,19.5 L444.8,19.4 L444.0,19.4 L443.2,19.7 L442.4,19.2 L441.6,19.9 L440.8,20.3 L440.0,19.2 L439.2,19.3 L438.4,20.2 L437.6,20.4 L436.8,19.8 L436.0,21.1 L435.2,19.6 L434.4,19.3 L433.6,20.2 L432.8,19.6 L432.0,20.7 L431.2,19.4 L430.4,19.3 L429.6,19.2 L428.8,19.5 L428.0,20.3 L427.2,19.3 L426.4,19.9 L425.6,19.3 L424.8,19.3 L424.0,20.0 L423.2,19.3 L422.4,20.2 L421.6,20.4 L420.8,20.0 L420.0,20.1 L419.2,19.5 L418.4,19.3 L417.6,20.2 L416.8,19.7 L416.0,19.3 L415.2,19.4 L414.4,19.7 L413.6,19.5 L412.8,19.2 L412.0,19.3 L411.2,19.8 L410.4,20.3 L409.6,19.3 L408.8,19.7 L408.0,20.6 L407.2,20.4 L406.4,19.5 L405.6,19.9 L404.8,19.4 L404.0,19.6 L403.2,19.5 L402.4,19.2 L401.6,19.2 L400.8,19.8 L400.0,19.7 L399.2,19.3 L398.4,19.2 L397.6,19.3 L396.8,19.7 L396.0,20.2 L395.2,20.2 L394.4,19.6 L393.6,20.4 L392.8,20.5 L392.0,20.7 L391.2,19.5 L390.4,19.2 L389.6,19.2 L388.8,19.3 L388.0,20.3 L387.2,20.1 L386.4,20.0 L385.6,20.2 L384.8,19.4 L384.0,19.2 L383.2,19.6 L382.4,20.6 L381.6,19.9 L380.8,20.1 L380.0,21.1 L379.2,19.8 L378.4,19.5 L377.6,19.3 L376.8,20.1 L376.0,19.7 L375.2,19.5 L374.4,19.2 L373.6,20.3 L372.8,19.3 L372.0,19.2 L371.2,19.3 L370.4,19.4 L369.6,19.5 L368.8,19.8 L368.0,20.9 L367.2,19.8 L366.4,19.4 L365.6,19.6 L364.8,19.4 L364.0,19.4 L363.2,20.4 L362.4,20.2 L361.6,19.3 L360.8,19.5 L360.0,20.2 L359.2,19.3 L358.4,19.2 L357.6,19.2 L356.8,19.4 L356.0,19.6 L355.2,20.0 L354.4,20.6 L353.6,20.0 L352.8,19.8 L352.0,20.4 L351.2,19.3 L350.4,19.7 L349.6,19.9 L348.8,19.4 L348.0,19.8 L347.2,19.2 L346.4,19.8 L345.6,19.6 L344.8,20.3 L344.0,20.2 L343.2,19.7 L342.4,20.0 L341.6,21.2 L340.8,19.6 L340.0,19.8 L339.2,20.5 L338.4,20.3 L337.6,19.3 L336.8,19.3 L336.0,19.4 L335.2,19.4 L334.4,19.6 L333.6,20.4 L332.8,19.4 L332.0,19.4 L331.2,19.3 L330.4,20.2 L329.6,19.8 L328.8,20.2 L328.0,20.2 L327.2,20.0 L326.4,20.2 L325.6,19.6 L324.8,19.7 L324.0,19.7 L323.2,19.2 L322.4,19.5 L321.6,20.2 L320.8,19.3 L320.0,19.8 L319.2,20.1 L318.4,19.5 L317.6,20.0 L316.8,19.2 L316.0,20.3 L315.2,19.5 L314.4,19.7 L313.6,20.5 L312.8,19.5 L312.0,20.8 L311.2,20.3 L310.4,19.2 L309.6,20.3 L308.8,20.3 L308.0,19.2 L307.2,20.2 L306.4,19.2 L305.6,19.5 L304.8,19.5 L304.0,19.5 L303.2,19.3 L302.4,19.7 L301.6,19.8 L300.8,20.0 L300.0,19.3 L299.2,19.9 L298.4,20.0 L297.6,19.4 L296.8,19.7 L296.0,19.7 L295.2,19.9 L294.4,19.8 L293.6,19.5 L292.8,19.4 L292.0,19.5 L291.2,20.3 L290.4,19.9 L289.6,19.3 L288.8,19.8 L288.0,19.3 L287.2,19.4 L286.4,19.9 L285.6,20.2 L284.8,20.4 L284.0,20.0 L283.2,19.5 L282.4,19.8 L281.6,19.7 L280.8,19.7 L280.0,19.6 L279.2,20.0 L278.4,19.2 L277.6,19.4 L276.8,19.2 L276.0,19.2 L275.2,19.3 L274.4,20.5 L273.6,20.5 L272.8,20.8 L272.0,20.3 L271.2,19.7 L270.4,20.7 L269.6,19.7 L268.8,20.2 L268.0,20.0 L267.2,19.2 L266.4,19.7 L265.6,19.8 L264.8,19.2 L264.0,20.4 L263.2,19.3 L262.4,19.4 L261.6,20.1 L260.8,20.4 L260.0,20.3 L259.2,19.9 L258.4,19.5 L257.6,19.4 L256.8,19.4 L256.0,19.2 L255.2,19.5 L254.4,19.2 L253.6,19.5 L252.8,19.5 L252.0,19.4 L251.2,19.2 L250.4,19.4 L249.6,19.3 L248.8,20.3 L248.0,19.3 L247.2,20.9 L246.4,20.2 L245.6,19.7 L244.8,19.8 L244.0,19.5 L243.2,20.8 L242.4,20.0 L241.6,19.2 L240.8,19.2 L240.0,19.3 L239.2,19.9 L238.4,19.2 L237.6,19.2 L236.8,19.2 L236.0,19.3 L235.2,19.4 L234.4,19.7 L233.6,20.7 L232.8,20.7 L232.0,20.2 L231.2,20.4 L230.4,19.9 L229.6,20.0 L228.8,20.2 L228.0,19.5 L227.2,19.2 L226.4,19.6 L225.6,19.8 L224.8,19.2 L224.0,19.3 L223.2,19.2 L222.4,19.3 L221.6,19.2 L220.8,19.5 L220.0,20.2 L219.2,19.6 L218.4,19.4 L217.6,19.4 L216.8,19.8 L216.0,19.4 L215.2,20.2 L214.4,19.6 L213.6,19.3 L212.8,19.4 L212.0,20.1 L211.2,19.2 L210.4,20.1 L209.6,19.2 L208.8,20.0 L208.0,19.7 L207.2,20.3 L206.4,19.5 L205.6,19.9 L204.8,19.9 L204.0,20.8 L203.2,19.4 L202.4,20.0 L201.6,20.2 L200.8,19.4 L200.0,19.2 L199.2,19.3 L198.4,19.9 L197.6,19.2 L196.8,19.3 L196.0,19.2 L195.2,20.3 L194.4,19.9 L193.6,20.4 L192.8,19.6 L192.0,20.0 L191.2,19.5 L190.4,19.8 L189.6,20.0 L188.8,19.2 L188.0,19.3 L187.2,19.5 L186.4,19.4 L185.6,19.2 L184.8,20.0 L184.0,20.4 L183.2,19.5 L182.4,19.4 L181.6,20.3 L180.8,19.3 L180.0,20.3 L179.2,20.1 L178.4,20.5 L177.6,20.3 L176.8,20.5 L176.0,19.3 L175.2,19.2 L174.4,19.4 L173.6,19.2 L172.8,19.2 L172.0,20.0 L171.2,20.3 L170.4,19.6 L169.6,19.3 L168.8,20.3 L168.0,20.1 L167.2,19.8 L166.4,20.4 L165.6,20.0 L164.8,20.2 L164.0,20.2 L163.2,20.6 L162.4,20.3 L161.6,19.5 L160.8,19.9 L160.0,19.3 L159.2,19.3 L158.4,19.6 L157.6,19.2 L156.8,19.9 L156.0,19.6 L155.2,19.5 L154.4,19.3 L153.6,19.6 L152.8,20.2 L152.0,20.1 L151.2,19.2 L150.4,19.6 L149.6,20.1 L148.8,20.7 L148.0,19.4 L147.2,20.2 L146.4,19.6 L145.6,19.5 L144.8,19.4 L144.0,20.2 L143.2,19.2 L142.4,19.4 L141.6,19.3 L140.8,19.6 L140.0,19.3 L139.2,19.6 L138.4,20.2 L137.6,20.3 L136.8,20.5 L136.0,21.0 L135.2,19.2 L134.4,19.6 L133.6,19.3 L132.8,19.7 L132.0,20.4 L131.2,20.0 L130.4,19.2 L129.6,20.0 L128.8,20.2 L128.0,19.2 L127.2,19.2 L126.4,19.2 L125.6,21.0 L124.8,19.8 L124.0,20.9 L123.2,20.3 L122.4,19.7 L121.6,20.7 L120.8,20.2 L120.0,19.7 L119.2,19.2 L118.4,20.0 L117.6,19.7 L116.8,19.5 L116.0,20.0 L115.2,20.2 L114.4,19.7 L113.6,19.3 L112.8,19.2 L112.0,19.5 L111.2,20.7 L110.4,21.2 L109.6,20.7 L108.8,20.0 L108.0,19.3 L107.2,19.2 L106.4,19.2 L105.6,19.4 L104.8,19.5 L104.0,19.3 L103.2,19.9 L102.4,20.0 L101.6,20.0 L100.8,20.1 L100.0,20.4 L99.2,20.0 L98.4,19.6 L97.6,20.3 L96.8,20.0 L96.0,19.6 L95.2,20.8 L94.4,20.3 L93.6,19.5 L92.8,19.2 L92.0,19.6 L91.2,19.2 L90.4,19.5 L89.6,20.3 L88.8,19.2 L88.0,19.2 L87.2,20.0 L86.4,19.3 L85.6,19.3 L84.8,19.3 L84.0,19.9 L83.2,21.1 L82.4,19.5 L81.6,19.6 L80.8,19.2 L80.0,19.7 L79.2,20.1 L78.4,19.2 L77.6,19.4 L76.8,19.2 L76.0,19.2 L75.2,19.2 L74.4,19.2 L73.6,19.3 L72.8,19.2 L72.0,19.4 L71.2,19.7 L70.4,19.5 L69.6,20.4 L68.8,20.8 L68.0,20.1 L67.2,19.7 L66.4,19.7 L65.6,19.5 L64.8,19.8 L64.0,20.3 L63.2,19.6 L62.4,19.4 L61.6,19.4 L60.8,19.2 L60.0,19.3 L59.2,19.6 L58.4,19.8 L57.6,19.5 L56.8,20.5 L56.0,20.2 L55.2,19.7 L54.4,20.9 L53.6,20.1 L52.8,19.6 L52.0,19.4 L51.2,19.2 L50.4,20.1 L49.6,19.4 L48.8,19.3 L48.0,19.2 L47.2,19.9 L46.4,19.2 L45.6,19.2 L44.8,19.6 L44.0,19.8 L43.2,19.7 L42.4,21.2 L41.6,20.4 L40.8,19.8 L40.0,19.5 L39.2,20.3 L38.4,20.0 L37.6,19.4 L36.8,19.6 L36.0,19.6 L35.2,19.8 L34.4,19.3 L33.6,20.1 L32.8,19.6 L32.0,19.9 L31.2,19.9 L30.4,19.7 L29.6,20.2 L28.8,20.5 L28.0,20.1 L27.2,20.4 L26.4,19.6 L25.6,19.3 L24.8,19.8 L24.0,20.0 L23.2,19.3 L22.4,19.4 L21.6,19.6 L20.8,19.3 L20.0,19.4 L19.2,19.8 L18.4,19.3 L17.6,19.3 L16.8,19.9 L16.0,20.2 L15.2,20.2 L14.4,19.5 L13.6,19.4 L12.8,20.1 L12.0,19.2 L11.2,20.3 L10.4,19.4 L9.6,19.6 L8.8,20.3 L8.0,19.7 L7.2,19.3 L6.4,19.2 L5.6,19.9 L4.8,19.1 L4.0,18.8 L3.2,18.8 L2.4,18.7 L1.6,18.5 L0.8,18.2 L0.0,17.9Z" fill="#33501a"/></g>
<rect x="13.49" y="0" width="1.5" height="35.5" fill="#8fd04a"/>
<rect x="27.02" y="0" width="1.5" height="35.5" fill="#8fd04a"/>
<rect x="40.56" y="0" width="1.5" height="35.5" fill="#8fd04a"/>
<rect x="54.09" y="0" width="1.5" height="35.5" fill="#8fd04a"/>
<rect x="67.63" y="0" width="1.5" height="35.5" fill="#8fd04a"/>
<text x="70.58" y="12.1" font-size="8.2" fill="#bfe86a" font-family="Liberation Sans, sans-serif">5</text>
<rect x="81.17" y="0" width="1.5" height="35.5" fill="#8fd04a"/>
<rect x="94.70" y="0" width="1.5" height="35.5" fill="#8fd04a"/>
<rect x="108.24" y="0" width="1.5" height="35.5" fill="#8fd04a"/>
<rect x="121.77" y="0" width="1.5" height="35.5" fill="#8fd04a"/>
<rect x="135.16" y="0" width="1.8" height="35.5" fill="#f4f4f4"/>
<text x="138.26" y="12.1" font-size="8.2" fill="#bfe86a" font-family="Liberation Sans, sans-serif">10</text>
<rect x="148.85" y="0" width="1.5" height="35.5" fill="#8fd04a"/>
<rect x="162.38" y="0" width="1.5" height="35.5" fill="#8fd04a"/>
<rect x="175.92" y="0" width="1.5" height="35.5" fill="#8fd04a"/>
<rect x="189.45" y="0" width="1.5" height="35.5" fill="#8fd04a"/>
<rect x="202.99" y="0" width="1.5" height="35.5" fill="#8fd04a"/>
<text x="205.94" y="12.1" font-size="8.2" fill="#bfe86a" font-family="Liberation Sans, sans-serif">15</text>
<rect x="216.53" y="0" width="1.5" height="35.5" fill="#8fd04a"/>
<rect x="230.06" y="0" width="1.5" height="35.5" fill="#8fd04a"/>
<rect x="243.60" y="0" width="1.5" height="35.5" fill="#8fd04a"/>
<rect x="255.98" y="0" width="3.8" height="35.5" fill="#181818" opacity="0.55"/>
<rect x="257.13" y="0" width="1.5" height="35.5" fill="#5f8f2c"/>
<rect x="270.52" y="0" width="1.8" height="35.5" fill="#f4f4f4"/>
<text x="273.62" y="12.1" font-size="8.2" fill="#9fd050" font-family="Liberation Sans, sans-serif">20</text>
<rect x="283.06" y="0" width="3.8" height="35.5" fill="#181818" opacity="0.55"/>
<rect x="284.21" y="0" width="1.5" height="35.5" fill="#5f8f2c"/>
<rect x="296.59" y="0" width="3.8" height="35.5" fill="#181818" opacity="0.55"/>
<rect x="297.74" y="0" width="1.5" height="35.5" fill="#5f8f2c"/>
<rect x="310.13" y="0" width="3.8" height="35.5" fill="#181818" opacity="0.55"/>
<rect x="311.28" y="0" width="1.5" height="35.5" fill="#5f8f2c"/>
<rect x="323.66" y="0" width="3.8" height="35.5" fill="#181818" opacity="0.55"/>
<rect x="324.81" y="0" width="1.5" height="35.5" fill="#5f8f2c"/>
<rect x="337.20" y="0" width="3.8" height="35.5" fill="#181818" opacity="0.55"/>
<rect x="338.35" y="0" width="1.5" height="35.5" fill="#5f8f2c"/>
<text x="341.30" y="12.1" font-size="8.2" fill="#9fd050" font-family="Liberation Sans, sans-serif">25</text>
<rect x="350.74" y="0" width="3.8" height="35.5" fill="#181818" opacity="0.55"/>
<rect x="351.89" y="0" width="1.5" height="35.5" fill="#5f8f2c"/>
<rect x="364.27" y="0" width="3.8" height="35.5" fill="#181818" opacity="0.55"/>
<rect x="365.42" y="0" width="1.5" height="35.5" fill="#5f8f2c"/>
<rect x="377.81" y="0" width="3.8" height="35.5" fill="#181818" opacity="0.55"/>
<rect x="378.96" y="0" width="1.5" height="35.5" fill="#5f8f2c"/>
<rect x="391.34" y="0" width="3.8" height="35.5" fill="#181818" opacity="0.55"/>
<rect x="392.49" y="0" width="1.5" height="35.5" fill="#5f8f2c"/>
<rect x="405.88" y="0" width="1.8" height="35.5" fill="#f4f4f4"/>
<text x="408.98" y="12.1" font-size="8.2" fill="#9fd050" font-family="Liberation Sans, sans-serif">30</text>
<rect x="418.42" y="0" width="3.8" height="35.5" fill="#181818" opacity="0.55"/>
<rect x="419.57" y="0" width="1.5" height="35.5" fill="#5f8f2c"/>
<rect x="431.95" y="0" width="3.8" height="35.5" fill="#181818" opacity="0.55"/>
<rect x="433.10" y="0" width="1.5" height="35.5" fill="#5f8f2c"/>
<rect x="445.49" y="0" width="3.8" height="35.5" fill="#181818" opacity="0.55"/>
<rect x="446.64" y="0" width="1.5" height="35.5" fill="#5f8f2c"/>
<rect x="459.02" y="0" width="3.8" height="35.5" fill="#181818" opacity="0.55"/>
<rect x="460.17" y="0" width="1.5" height="35.5" fill="#5f8f2c"/>
<rect x="472.56" y="0" width="3.8" height="35.5" fill="#181818" opacity="0.55"/>
<rect x="473.71" y="0" width="1.5" height="35.5" fill="#5f8f2c"/>
<text x="476.66" y="12.1" font-size="8.2" fill="#9fd050" font-family="Liberation Sans, sans-serif">35</text>
<rect x="486.10" y="0" width="3.8" height="35.5" fill="#181818" opacity="0.55"/>
<rect x="487.25" y="0" width="1.5" height="35.5" fill="#5f8f2c"/>
<rect x="499.63" y="0" width="3.8" height="35.5" fill="#181818" opacity="0.55"/>
<rect x="500.78" y="0" width="1.5" height="35.5" fill="#5f8f2c"/>
<rect x="513.17" y="0" width="3.8" height="35.5" fill="#181818" opacity="0.55"/>
<rect x="514.32" y="0" width="1.5" height="35.5" fill="#5f8f2c"/>
<rect x="526.70" y="0" width="3.8" height="35.5" fill="#181818" opacity="0.55"/>
<rect x="527.85" y="0" width="1.5" height="35.5" fill="#5f8f2c"/>
<rect x="541.24" y="0" width="1.8" height="35.5" fill="#f4f4f4"/>
<text x="544.34" y="12.1" font-size="8.2" fill="#9fd050" font-family="Liberation Sans, sans-serif">40</text>
<rect x="553.78" y="0" width="3.8" height="35.5" fill="#181818" opacity="0.55"/>
<rect x="554.93" y="0" width="1.5" height="35.5" fill="#5f8f2c"/>
<rect x="567.31" y="0" width="3.8" height="35.5" fill="#181818" opacity="0.55"/>
<rect x="568.46" y="0" width="1.5" height="35.5" fill="#5f8f2c"/>
<rect x="580.85" y="0" width="3.8" height="35.5" fill="#181818" opacity="0.55"/>
<rect x="582.00" y="0" width="1.5" height="35.5" fill="#5f8f2c"/>
<rect x="594.38" y="0" width="3.8" height="35.5" fill="#181818" opacity="0.55"/>
<rect x="595.53" y="0" width="1.5" height="35.5" fill="#5f8f2c"/>
<rect x="607.92" y="0" width="3.8" height="35.5" fill="#181818" opacity="0.55"/>
<rect x="609.07" y="0" width="1.5" height="35.5" fill="#5f8f2c"/>
<text x="612.02" y="12.1" font-size="8.2" fill="#9fd050" font-family="Liberation Sans, sans-serif">45</text>
<rect x="621.46" y="0" width="3.8" height="35.5" fill="#181818" opacity="0.55"/>
<rect x="622.61" y="0" width="1.5" height="35.5" fill="#5f8f2c"/>
<rect x="634.99" y="0" width="3.8" height="35.5" fill="#181818" opacity="0.55"/>
<rect x="636.14" y="0" width="1.5" height="35.5" fill="#5f8f2c"/>
<rect x="648.53" y="0" width="3.8" height="35.5" fill="#181818" opacity="0.55"/>
<rect x="649.68" y="0" width="1.5" height="35.5" fill="#5f8f2c"/>
<rect x="662.06" y="0" width="3.8" height="35.5" fill="#181818" opacity="0.55"/>
<rect x="663.21" y="0" width="1.5" height="35.5" fill="#5f8f2c"/>
<rect x="676.60" y="0" width="1.8" height="35.5" fill="#f4f4f4"/>
<text x="679.70" y="12.1" font-size="8.2" fill="#9fd050" font-family="Liberation Sans, sans-serif">50</text>
<rect x="689.14" y="0" width="3.8" height="35.5" fill="#181818" opacity="0.55"/>
<rect x="690.29" y="0" width="1.5" height="35.5" fill="#5f8f2c"/>
<rect x="702.67" y="0" width="3.8" height="35.5" fill="#181818" opacity="0.55"/>
<rect x="703.82" y="0" width="1.5" height="35.5" fill="#5f8f2c"/>
<rect x="716.21" y="0" width="3.8" height="35.5" fill="#181818" opacity="0.55"/>
<rect x="717.36" y="0" width="1.5" height="35.5" fill="#5f8f2c"/>
<rect x="729.74" y="0" width="3.8" height="35.5" fill="#181818" opacity="0.55"/>
<rect x="730.89" y="0" width="1.5" height="35.5" fill="#5f8f2c"/>
<rect x="743.28" y="0" width="3.8" height="35.5" fill="#181818" opacity="0.55"/>
<rect x="744.43" y="0" width="1.5" height="35.5" fill="#5f8f2c"/>
<text x="747.38" y="12.1" font-size="8.2" fill="#9fd050" font-family="Liberation Sans, sans-serif">55</text>
<rect x="128.4" y="0" width="0.9" height="35.5" fill="#2c3d18"/>
<rect x="206.10000000000002" y="0" width="6.699999999999989" height="35.5" fill="#d8f8be" opacity="0.97"/>
</g>
</svg>
<div class="t" style="left:176.6px;top:387.7px">15:26</div>
<div class="t" style="left:723.2px;top:387.7px">55:52</div>
<div id="hs">
 <svg style="position:absolute;left:0;top:0" width="800" height="12" viewBox="0 0 800 12">
  <path d="M6.2 2.6 L2.4 5.8 L6.2 9Z" fill="#c8c8c8"/>
  <path d="M780.6 2.6 L784.4 5.8 L780.6 9Z" fill="#c8c8c8"/>
  <rect x="37.4" y="2.3" width="500" height="6.9" rx="3.45" fill="#a6a6a6"/>
 </svg>
</div>
<div id="topband"></div>
</div></body></html>
